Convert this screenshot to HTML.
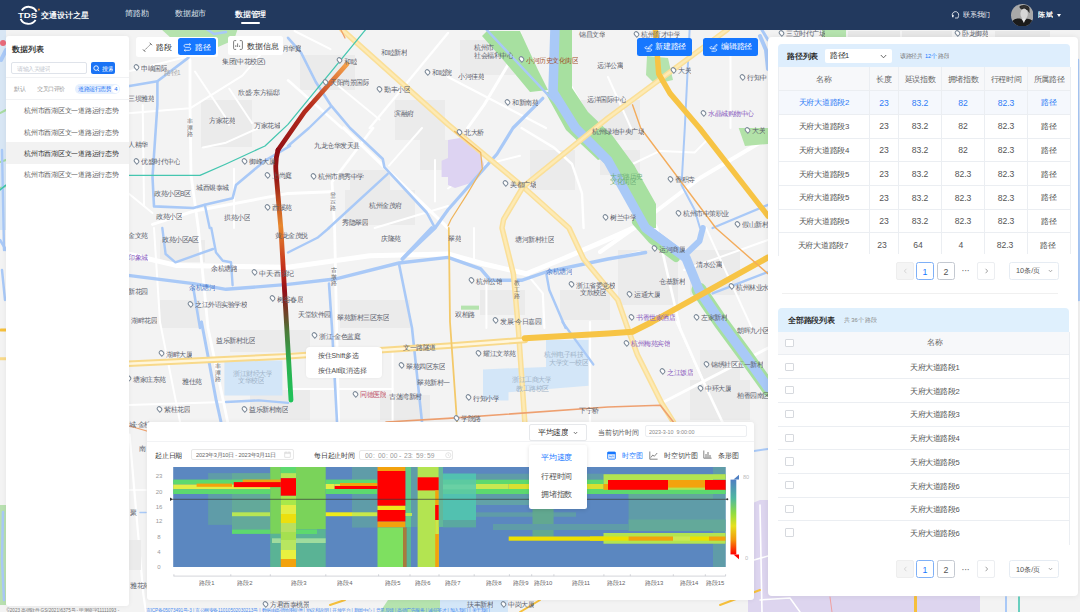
<!DOCTYPE html>
<html><head><meta charset="utf-8">
<style>
*{margin:0;padding:0;box-sizing:border-box}
html,body{width:1080px;height:612px;overflow:hidden;font-family:"Liberation Sans",sans-serif;background:#f3f3f3;color:#333}
.abs{position:absolute}
.h{position:absolute;white-space:nowrap;line-height:1;transform:scale(.25);transform-origin:0 0;font-weight:500}
#hdr{position:absolute;left:0;top:0;width:1080px;height:30px;background:#22395e;color:#fff}
.panel{position:absolute;background:#fff;border-radius:4px}
.rel{position:absolute;left:0;top:0}
</style></head><body>
<svg class="abs" style="left:0;top:0" width="1080" height="612" viewBox="0 0 1080 612">
<rect x="0" y="0" width="1080" height="612" fill="#f3f3f3"/>
<rect x="201" y="100" width="51" height="47" fill="#ebebeb"/>
<rect x="300" y="55" width="55" height="35" fill="#ebebeb"/>
<rect x="460" y="40" width="55" height="35" fill="#ebebeb"/>
<rect x="580" y="100" width="60" height="40" fill="#ebebeb"/>
<rect x="395" y="100" width="50" height="40" fill="#ebebeb"/>
<rect x="420" y="140" width="40" height="30" fill="#ebebeb"/>
<rect x="160" y="240" width="45" height="22" fill="#ebebeb"/>
<rect x="340" y="300" width="70" height="28" fill="#ebebeb"/>
<rect x="230" y="330" width="80" height="22" fill="#ebebeb"/>
<rect x="480" y="290" width="45" height="25" fill="#ebebeb"/>
<rect x="618" y="250" width="60" height="55" fill="#ebebeb"/>
<rect x="690" y="250" width="50" height="45" fill="#ebebeb"/>
<rect x="350" y="170" width="40" height="30" fill="#ebebeb"/>
<rect x="380" y="395" width="50" height="25" fill="#ebebeb"/>
<rect x="700" y="350" width="40" height="30" fill="#ebebeb"/>
<rect x="600" y="150" width="40" height="25" fill="#ebebeb"/>
<rect x="345" y="190" width="70" height="35" fill="#ebebeb"/>
<rect x="560" y="290" width="50" height="30" fill="#ebebeb"/>
<rect x="530" y="150" width="45" height="40" fill="#ebebeb"/>
<rect x="160" y="300" width="40" height="28" fill="#ebebeb"/>
<rect x="250" y="390" width="60" height="30" fill="#ebebeb"/>
<rect x="690" y="380" width="60" height="40" fill="#ebebeb"/>
<path d="M128 254 L177 265.6 L288 267.2 L369.7 255.8 L448 254 L484 264 L526.4 273.8 L562.4 259 L608 239.4 L640 225" stroke="#ffffff" stroke-width="5" fill="none" stroke-linecap="round" stroke-linejoin="round" />
<path d="M768 137.8 L700 178 L634 228 L600 252" stroke="#ffffff" stroke-width="4" fill="none" stroke-linecap="round" stroke-linejoin="round" />
<path d="M172 30 L190 60 L190 105 L191 175 L198.3 228 L208 328 L227.7 422" stroke="#ffffff" stroke-width="2.8" fill="none" stroke-linecap="round" stroke-linejoin="round" />
<path d="M343.6 128 L448 228" stroke="#ffffff" stroke-width="3.2" fill="none" stroke-linecap="round" stroke-linejoin="round" />
<path d="M288 80.3 L342 128" stroke="#ffffff" stroke-width="2.6" fill="none" stroke-linecap="round" stroke-linejoin="round" />
<path d="M448 33 L369.7 128" stroke="#ffffff" stroke-width="2.4" fill="none" stroke-linecap="round" stroke-linejoin="round" />
<path d="M373 128 L332 182 L334.6 228 L338.6 422" stroke="#ffffff" stroke-width="2.8" fill="none" stroke-linecap="round" stroke-linejoin="round" />
<path d="M152.5 224.4 L193.4 211.3 L288 193.4 L330.5 191.7" stroke="#ffffff" stroke-width="3" fill="none" stroke-linecap="round" stroke-linejoin="round" />
<path d="M520 33 L508.5 64 L484 105 L467.6 128" stroke="#ffffff" stroke-width="3" fill="none" stroke-linecap="round" stroke-linejoin="round" />
<path d="M448 77 L546 128" stroke="#ffffff" stroke-width="2.2" fill="none" stroke-linecap="round" stroke-linejoin="round" />
<path d="M564 28 L565.6 77 L595 128 L608 141 L657 228 L680 328 L706 387.4 L722.4 422" stroke="#ffffff" stroke-width="2.6" fill="none" stroke-linecap="round" stroke-linejoin="round" />
<path d="M521.5 128 L554 147.6 L572 164 L582 193.4 L583.6 228" stroke="#ffffff" stroke-width="2.4" fill="none" stroke-linecap="round" stroke-linejoin="round" />
<path d="M448 188.5 L480.7 165.6 L520 155.8" stroke="#ffffff" stroke-width="2" fill="none" stroke-linecap="round" stroke-linejoin="round" />
<path d="M663.6 402 L768 348" stroke="#ffffff" stroke-width="3" fill="none" stroke-linecap="round" stroke-linejoin="round" />
<path d="M608 77 L631 128" stroke="#ffffff" stroke-width="2" fill="none" stroke-linecap="round" stroke-linejoin="round" />
<path d="M730.5 56 L730.5 128" stroke="#ffffff" stroke-width="2" fill="none" stroke-linecap="round" stroke-linejoin="round" />
<path d="M632.5 164 L660 150.9 L694.6 152.5 L709.3 137.8" stroke="#ffffff" stroke-width="2" fill="none" stroke-linecap="round" stroke-linejoin="round" />
<path d="M128 71.5 L190 56" stroke="#ffffff" stroke-width="2.2" fill="none" stroke-linecap="round" stroke-linejoin="round" />
<path d="M195 71.5 L226 118 L229 124.6" stroke="#ffffff" stroke-width="2" fill="none" stroke-linecap="round" stroke-linejoin="round" />
<path d="M128 113.2 L190 108.3 L242.4 75.6 L260 55" stroke="#ffffff" stroke-width="2" fill="none" stroke-linecap="round" stroke-linejoin="round" />
<path d="M229.3 88.7 L252 123" stroke="#ffffff" stroke-width="2" fill="none" stroke-linecap="round" stroke-linejoin="round" />
<path d="M142.7 105 L144 206" stroke="#ffffff" stroke-width="2" fill="none" stroke-linecap="round" stroke-linejoin="round" />
<path d="M128 193 L152.5 213" stroke="#ffffff" stroke-width="2" fill="none" stroke-linecap="round" stroke-linejoin="round" />
<path d="M234 168.8 L234 228" stroke="#ffffff" stroke-width="2" fill="none" stroke-linecap="round" stroke-linejoin="round" />
<path d="M203 147.6 L226 142.7 L258.7 128" stroke="#ffffff" stroke-width="2" fill="none" stroke-linecap="round" stroke-linejoin="round" />
<path d="M154 228 L160 322 L180 422" stroke="#ffffff" stroke-width="2" fill="none" stroke-linecap="round" stroke-linejoin="round" />
<path d="M288 389 L392.6 389" stroke="#ffffff" stroke-width="2.2" fill="none" stroke-linecap="round" stroke-linejoin="round" />
<path d="M392.6 348 L392.6 422" stroke="#ffffff" stroke-width="2" fill="none" stroke-linecap="round" stroke-linejoin="round" />
<path d="M474 228 L474 260" stroke="#ffffff" stroke-width="2" fill="none" stroke-linecap="round" stroke-linejoin="round" />
<path d="M486.4 277 L486.4 328" stroke="#ffffff" stroke-width="2" fill="none" stroke-linecap="round" stroke-linejoin="round" />
<path d="M528 275.4 L542.8 293.4 L544.4 328" stroke="#ffffff" stroke-width="2.2" fill="none" stroke-linecap="round" stroke-linejoin="round" />
<path d="M590 322 L590 422" stroke="#ffffff" stroke-width="2.2" fill="none" stroke-linecap="round" stroke-linejoin="round" />
<path d="M706 228 L751.8 328" stroke="#ffffff" stroke-width="2" fill="none" stroke-linecap="round" stroke-linejoin="round" />
<path d="M608 259 L640 252" stroke="#ffffff" stroke-width="2" fill="none" stroke-linecap="round" stroke-linejoin="round" />
<path d="M389 165.6 L422 128" stroke="#ffffff" stroke-width="2" fill="none" stroke-linecap="round" stroke-linejoin="round" />
<path d="M435 160 L435 201.5" stroke="#ffffff" stroke-width="2" fill="none" stroke-linecap="round" stroke-linejoin="round" />
<path d="M374.6 228 L448 206" stroke="#ffffff" stroke-width="2" fill="none" stroke-linecap="round" stroke-linejoin="round" />
<path d="M294.5 31 L330.5 49.2" stroke="#ffffff" stroke-width="2" fill="none" stroke-linecap="round" stroke-linejoin="round" />
<path d="M333.8 82 L379.5 119.5" stroke="#ffffff" stroke-width="2" fill="none" stroke-linecap="round" stroke-linejoin="round" />
<path d="M128 405 L226 402" stroke="#ffffff" stroke-width="2" fill="none" stroke-linecap="round" stroke-linejoin="round" />
<path d="M676.6 322 L706 387" stroke="#ffffff" stroke-width="2" fill="none" stroke-linecap="round" stroke-linejoin="round" />
<path d="M684 270 L768 240" stroke="#ffffff" stroke-width="2" fill="none" stroke-linecap="round" stroke-linejoin="round" />
<path d="M448 140 L460 138 L480 152 L484 165 L474 182 L455 188 L448 185 Z" fill="#ddd3f2"/>
<path d="M441.6 160.7 L448 158 L448 177 L441.6 177 Z" fill="#ddd3f2"/>
<path d="M748 505 L760 500 L980 500 L980 612 L748 612 Z" fill="#ddd5ef"/>
<path d="M754 451 L768 449" stroke="#a9c9f7" stroke-width="2" fill="none" stroke-linecap="round" stroke-linejoin="round" />
<path d="M754 560 L768 556 M760 505 L762 612" stroke="#ffffff" stroke-width="1.6" fill="none" stroke-linecap="round" stroke-linejoin="round" />
<path d="M760 600 L790 598 L800 612" stroke="#ffffff" stroke-width="1.5" fill="none" stroke-linecap="round" stroke-linejoin="round" />
<path d="M830 597 L832 612" stroke="#f0a0a0" stroke-width="1" fill="none" stroke-linecap="round" stroke-linejoin="round" />
<path d="M915.5 597 L915.5 612" stroke="#f6c03c" stroke-width="3" fill="none" stroke-linecap="round" stroke-linejoin="round" />
<path d="M1006 597 L1006 612" stroke="#a9c9f7" stroke-width="2" fill="none" stroke-linecap="round" stroke-linejoin="round" />
<path d="M1019 597 L1019 612" stroke="#3bc3ae" stroke-width="1.5" fill="none" stroke-linecap="round" stroke-linejoin="round" />
<rect x="822" y="30" width="24" height="7" fill="#b5e3ae"/>
<rect x="848" y="31" width="52" height="6" fill="#e8e8e8"/>
<rect x="902" y="31" width="50" height="6" fill="#e8e8e8"/>
<rect x="995" y="31" width="55" height="6" fill="#e8e8e8"/>
<path d="M762 30 L768 40" stroke="#a9c9f7" stroke-width="3" fill="none" stroke-linecap="round" stroke-linejoin="round" />
<rect x="0" y="30" width="6" height="200" fill="#d8e6f4"/>
<path d="M0 113 L6 110 M0 162 L6 160 M0 188 L6 186" stroke="#a8dca0" stroke-width="2" fill="none" stroke-linecap="round" stroke-linejoin="round" />
<rect x="0" y="505" width="6" height="100" fill="#b8e0b0"/>
<path d="M3 512 L2 560 L4 600" stroke="#a9c9f7" stroke-width="2.5" fill="none" stroke-linecap="round" stroke-linejoin="round" />
<path d="M0 358.7 L6 358.7" stroke="#f8d98a" stroke-width="3" fill="none" stroke-linecap="round" stroke-linejoin="round" />
<path d="M0 240 L6 250 M2 270 L5 300" stroke="#a9c9f7" stroke-width="2.5" fill="none" stroke-linecap="round" stroke-linejoin="round" />
<circle cx="3" cy="43" r="3" fill="#e86a7a"/>
<path d="M224.4 360.4 L282.4 360.4 L282.4 395.5 L224.4 395.5 Z" fill="#d3e6f8"/>
<path d="M483 369.4 L546 367 L546 340 L588.5 340 L588.5 385.7 L508.5 392.3 L508.5 400.4 L500.3 400.4 L483 398.8 Z" fill="#d3e6f8"/>
<path d="M738.7 128 L768 128 L768 144 L745 146 Z" fill="#b2e2a8"/>
<path d="M647 56 L668 58 L673 80 L655 84 L646 75 Z" fill="#b5e3ae"/>
<path d="M461 305.6 L479 305.6 L479 309.7 L461 309.7 Z" fill="#b5e3ae"/>
<path d="M160 28 L238 28 L234 40 L218 47 L196 46 L172 39 Z" fill="#b5e3ae"/>
<path d="M205 28 L214 34 L226 32" stroke="#a9c9f7" stroke-width="2.5" fill="none" stroke-linecap="round" stroke-linejoin="round" />
<path d="M487 31 L520 31 L538 70 L548 90 L530 92 L505 62 L482 36 Z" fill="#a7e0a0"/>
<path d="M559 28 L572 28 L572 88 L588 112 L612 135 L634 165 L656 204 L656 228 L640 228 L612 172 L582 138 L560 104 L557 92 Z" fill="#a7e0a0"/>
<path d="M545 92 L552 92 L572 125 L604 158 L598 160 L566 130 Z" fill="#a7e0a0"/>
<path d="M636 222 L652 240 L676 258" stroke="#a7e0a0" stroke-width="8" fill="none" stroke-linecap="round" stroke-linejoin="round" />
<path d="M699 290 L720.7 322 L745 355 L770 390" stroke="#a7e0a0" stroke-width="15" fill="none" stroke-linecap="round" stroke-linejoin="round" />
<path d="M555 28 L553 92 L575.5 128 L608 160.7 L645.6 228 L686 258 L699 290 L720.7 322 L745 355 L768 387.4" stroke="#a9c9f7" stroke-width="9.5" fill="none" stroke-linecap="round" stroke-linejoin="round" />
<path d="M648 228 L686 256 M686 254 L699.5 241 L702.8 228" stroke="#a9c9f7" stroke-width="6" fill="none" stroke-linecap="round" stroke-linejoin="round" />
<path d="M485 28 L548 95 L580 128" stroke="#a9c9f7" stroke-width="2.5" fill="none" stroke-linecap="round" stroke-linejoin="round" />
<path d="M760 36 L766 50 L768 69" stroke="#a9c9f7" stroke-width="4" fill="none" stroke-linecap="round" stroke-linejoin="round" />
<path d="M542.8 98.3 L513 128 L497 154 L448 209.7 L435 228 L402.4 259" stroke="#a9c9f7" stroke-width="3.2" fill="none" stroke-linecap="round" stroke-linejoin="round" />
<path d="M128 275.4 L193.4 283.6 L226 289.3 L288 284.4 L337 278.7 L399 263 L448 257.4 L480.7 268.8 L490.5 280.3 L521.5 280.3 L546 272 L608 259 L645.6 252.5" stroke="#a9c9f7" stroke-width="3.4" fill="none" stroke-linecap="round" stroke-linejoin="round" />
<path d="M201.5 322 L208 356.3 L216.2 400.4 L221 422" stroke="#a9c9f7" stroke-width="3" fill="none" stroke-linecap="round" stroke-linejoin="round" />
<path d="M193.4 288.5 L200 328 L201.5 322" stroke="#a9c9f7" stroke-width="2.6" fill="none" stroke-linecap="round" stroke-linejoin="round" />
<path d="M329 283.6 L332 328 L337 422" stroke="#a9c9f7" stroke-width="2.6" fill="none" stroke-linecap="round" stroke-linejoin="round" />
<path d="M399 264 L412 328 L422 422" stroke="#a9c9f7" stroke-width="2.6" fill="none" stroke-linecap="round" stroke-linejoin="round" />
<path d="M546 272 L549.3 290 L565.6 328" stroke="#a9c9f7" stroke-width="2.4" fill="none" stroke-linecap="round" stroke-linejoin="round" />
<path d="M562.4 322 L593.4 364.5" stroke="#a9c9f7" stroke-width="2.2" fill="none" stroke-linecap="round" stroke-linejoin="round" />
<path d="M288 37.8 L301 52.5 L315.8 82 L330.5 104.8 L350 128 L382.8 159 L384.4 167.2 L427 213 L435 228" stroke="#a9c9f7" stroke-width="2.6" fill="none" stroke-linecap="round" stroke-linejoin="round" />
<path d="M330.5 107 L309 128 L288 146" stroke="#a9c9f7" stroke-width="2.4" fill="none" stroke-linecap="round" stroke-linejoin="round" />
<path d="M387.7 173.8 L328.8 228" stroke="#a9c9f7" stroke-width="2.4" fill="none" stroke-linecap="round" stroke-linejoin="round" />
<path d="M128 86.2 L157.4 81.3 L188.5 57.6" stroke="#a9c9f7" stroke-width="2.6" fill="none" stroke-linecap="round" stroke-linejoin="round" />
<path d="M157.4 81.3 L157.4 105 L152.5 177 L154 206.4 L193.4 208 L204.8 204.8 L232.6 198.3 L236 185 L265 160.7 L290 146" stroke="#a9c9f7" stroke-width="2.6" fill="none" stroke-linecap="round" stroke-linejoin="round" />
<path d="M204.8 204.8 L209.7 228" stroke="#a9c9f7" stroke-width="2.4" fill="none" stroke-linecap="round" stroke-linejoin="round" />
<path d="M162.3 228 L165.6 254 L175.4 262.3 L213 249" stroke="#a9c9f7" stroke-width="2.4" fill="none" stroke-linecap="round" stroke-linejoin="round" />
<path d="M211.3 228 L216 252.5 L222.8 260.7 L231 262.3 L232.6 285.2" stroke="#a9c9f7" stroke-width="2.4" fill="none" stroke-linecap="round" stroke-linejoin="round" />
<path d="M288 252.5 L317.4 237.8 L329 228" stroke="#a9c9f7" stroke-width="2.4" fill="none" stroke-linecap="round" stroke-linejoin="round" />
<path d="M431.8 228 L402.4 259" stroke="#a9c9f7" stroke-width="3.6" fill="none" stroke-linecap="round" stroke-linejoin="round" />
<path d="M689.7 28 L684.8 128 L681.5 185 L694.6 209.7 L700 228" stroke="#a9c9f7" stroke-width="2" fill="none" stroke-linecap="round" stroke-linejoin="round" />
<path d="M712.6 228 L768 204.8" stroke="#a9c9f7" stroke-width="2.4" fill="none" stroke-linecap="round" stroke-linejoin="round" />
<path d="M712.6 293.4 L768 272" stroke="#a9c9f7" stroke-width="2.4" fill="none" stroke-linecap="round" stroke-linejoin="round" />
<path d="M226 402 L258.7 400.4 L288 402.9" stroke="#a9c9f7" stroke-width="2.4" fill="none" stroke-linecap="round" stroke-linejoin="round" />
<path d="M1 60 L6 50" stroke="#a9c9f7" stroke-width="4" fill="none" stroke-linecap="round" stroke-linejoin="round" />
<path d="M2 150 L4 250" stroke="#a9c9f7" stroke-width="2.4" fill="none" stroke-linecap="round" stroke-linejoin="round" />
<path d="M1078 60 L1079 300" stroke="#a9c9f7" stroke-width="2.4" fill="none" stroke-linecap="round" stroke-linejoin="round" />
<path d="M342 29.6 L448 124.4 L523 186.8 L569 228 L583.6 259 L608 288.5 L617.8 300 L627.6 328 L637.4 354.7 L662 403.7 L673.4 422" stroke="#fadf98" stroke-width="5.5" fill="none" stroke-linecap="round" stroke-linejoin="round" />
<path d="M342 29.6 L448 124.4 L523 186.8 L569 228 L583.6 259 L608 288.5 L617.8 300 L627.6 328 L637.4 354.7 L662 403.7 L673.4 422" stroke="#fdeab4" stroke-width="2.5" fill="none" stroke-linecap="round" stroke-linejoin="round" />
<path d="M727.3 29.6 L608 117.9 L523 186.8 L503.6 219.5 L502 228 L513.4 273.8 L518.3 328 L524.8 422" stroke="#fadf98" stroke-width="5.5" fill="none" stroke-linecap="round" stroke-linejoin="round" />
<path d="M727.3 29.6 L608 117.9 L523 186.8 L503.6 219.5 L502 228 L513.4 273.8 L518.3 328 L524.8 422" stroke="#fdeab4" stroke-width="2.5" fill="none" stroke-linecap="round" stroke-linejoin="round" />
<path d="M128 363.7 L288 356.3 L448 345.7 L524.8 340" stroke="#f8d98a" stroke-width="6.5" fill="none" stroke-linecap="round" stroke-linejoin="round" />
<path d="M128 363.7 L288 356.3 L448 345.7 L524.8 340" stroke="#fff6dc" stroke-width="2.6" fill="none" stroke-linecap="round" stroke-linejoin="round" />
<path d="M655.4 29.6 L658.7 73.8 L670 93.4 L699.5 128 L768 216" stroke="#f7c445" stroke-width="5.5" fill="none" stroke-linecap="round" stroke-linejoin="round" />
<path d="M524.8 338.3 L608 333.4 L632.5 331.8 L652 322 L768 257.4" stroke="#f7c445" stroke-width="6" fill="none" stroke-linecap="round" stroke-linejoin="round" />
<path d="M448.8 228 L450 322 L457 422" stroke="#f3c96a" stroke-width="1.8" fill="none" stroke-linecap="round" stroke-linejoin="round" />
<path d="M1 330 L6 330" stroke="#f6c03c" stroke-width="3" fill="none" stroke-linecap="round" stroke-linejoin="round" />
<path d="M632.5 104.8 L640.7 128 L715.8 228 L768 273.8" stroke="#f3ac5c" stroke-width="1.4" fill="none" stroke-linecap="round" stroke-linejoin="round" />
<path d="M454.5 131.3 L480.7 152.5 L482.3 168.8 L467.6 193.4 L451 219.5 L448 226" stroke="#efb45a" stroke-width="1.2" fill="none" stroke-linecap="round" stroke-linejoin="round" />
<path d="M386 422 L448 418.4 L608 407 L660.3 405.3 L673.4 422" stroke="#eea070" stroke-width="1.6" fill="none" stroke-linecap="round" stroke-linejoin="round" />
<path d="M340 28 L345 38" stroke="#f0a06a" stroke-width="1.3" fill="none" stroke-linecap="round" stroke-linejoin="round" />
<path d="M129.5 426 L146.8 431" stroke="#f0a06a" stroke-width="1.3" fill="none" stroke-linecap="round" stroke-linejoin="round" />
<path d="M129.5 434.6 L143.3 594 L146 612" stroke="#ffffff" stroke-width="2.2" fill="none" stroke-linecap="round" stroke-linejoin="round" />
<path d="M129 490 L146 490" stroke="#ffffff" stroke-width="1.5" fill="none" stroke-linecap="round" stroke-linejoin="round" />
<path d="M140 512.6 L146 512.6" stroke="#a9c9f7" stroke-width="1.5" fill="none" stroke-linecap="round" stroke-linejoin="round" />
<rect x="129" y="540" width="12" height="30" fill="#ebebeb"/>
<path d="M146 600 L260 600 L262 612 L146 612 Z" fill="#f3f3f3"/>
<path d="M330 605 L345 600 M520 612 L540 600" stroke="#f6c03c" stroke-width="2" fill="none" stroke-linecap="round" stroke-linejoin="round" />
<path d="M388 600 L440 600 L445 612 L380 612 Z" fill="#b5e3ae"/>
<path d="M440 600 L508 600 L508 612 L440 612 Z" fill="#d3e6f8"/>
<path d="M720 605 L760 590" stroke="#f6c03c" stroke-width="2" fill="none" stroke-linecap="round" stroke-linejoin="round" />
<path d="M365.6 29.6 L288 124.4 L265 146 L226 164 L200 175.4 L128 175.4" stroke="#45c6b0" stroke-width="1.3" fill="none" stroke-linecap="round" stroke-linejoin="round" />
<path d="M0 190 L6 185" stroke="#3bc3ae" stroke-width="1.5" fill="none" stroke-linecap="round" stroke-linejoin="round" />
<defs>
<linearGradient id="rg1" gradientUnits="userSpaceOnUse" x1="347" y1="64" x2="277" y2="160">
<stop offset="0" stop-color="#f5a24a"/><stop offset="0.45" stop-color="#b8301e"/><stop offset="1" stop-color="#8e0d14"/></linearGradient>
<linearGradient id="rg2" gradientUnits="userSpaceOnUse" x1="0" y1="150" x2="0" y2="402">
<stop offset="0" stop-color="#8e0d14"/><stop offset="0.12" stop-color="#9a1a14"/><stop offset="0.3" stop-color="#e8882e"/>
<stop offset="0.48" stop-color="#c0281a"/><stop offset="0.56" stop-color="#920f18"/><stop offset="0.66" stop-color="#6a4a2a"/>
<stop offset="0.72" stop-color="#4a7a38"/><stop offset="0.85" stop-color="#2ab050"/><stop offset="1" stop-color="#1fc35a"/></linearGradient>
</defs>
<path d="M347 64 L304.5 112 L278 150" stroke="url(#rg1)" stroke-width="4.8" fill="none" stroke-linecap="round" stroke-linejoin="round" /><path d="M278 150 Q275 160 276 172 L281 230 L291 400" stroke="url(#rg2)" stroke-width="4.8" fill="none" stroke-linecap="round" stroke-linejoin="round" />
</svg>
<div class="abs" style="left:134.0px;top:64.4px;width:5px;height:6px;border-radius:50% 50% 50% 0;transform:rotate(-45deg);border:1.3px solid #7d8a99;background:#fff"></div>
<div class="h" style="left:141.00px;top:64.78px;font-size:26.00px;color:#5a606b;">申嘀国际</div>
<div class="h" style="left:164.00px;top:68.88px;font-size:26.00px;color:#aaa;">路径1</div>
<div class="h" style="left:222.00px;top:58.18px;font-size:26.00px;color:#5a606b;">集团(中花校区)</div>
<div class="h" style="left:275.00px;top:45.48px;font-size:26.00px;color:#5a606b;">碧月华庭</div>
<div class="abs" style="left:337.0px;top:57.2px;width:5px;height:6px;border-radius:50% 50% 50% 0;transform:rotate(-45deg);border:1.3px solid #7d8a99;background:#fff"></div>
<div class="h" style="left:344.00px;top:57.58px;font-size:26.00px;color:#5a606b;">和睦</div>
<div class="abs" style="left:323.0px;top:78.5px;width:5px;height:6px;border-radius:50% 50% 50% 0;transform:rotate(-45deg);border:1.3px solid #7d8a99;background:#fff"></div>
<div class="h" style="left:330.00px;top:78.88px;font-size:26.00px;color:#5a606b;">天阳尚景国际</div>
<div class="h" style="left:237.50px;top:88.58px;font-size:26.00px;color:#5a606b;">欣盛·东方福邸</div>
<div class="h" style="left:128.00px;top:95.18px;font-size:26.00px;color:#5a606b;">三坝雅苑</div>
<div class="h" style="left:209.00px;top:117.38px;font-size:26.00px;color:#5a606b;">方家花苑</div>
<div class="h" style="left:253.80px;top:121.88px;font-size:26.00px;color:#5a606b;">万家花城</div>
<div class="h" style="left:381.00px;top:49.38px;font-size:26.00px;color:#5a606b;">和睦新村</div>
<div class="abs" style="left:377.0px;top:85.5px;width:5px;height:6px;border-radius:50% 50% 50% 0;transform:rotate(-45deg);border:1.3px solid #7d8a99;background:#fff"></div>
<div class="h" style="left:384.00px;top:85.88px;font-size:26.00px;color:#5a606b;">勤丰小区</div>
<div class="abs" style="left:425.0px;top:68.5px;width:5px;height:6px;border-radius:50% 50% 50% 0;transform:rotate(-45deg);border:1.3px solid #7d8a99;background:#fff"></div>
<div class="h" style="left:432.00px;top:68.88px;font-size:26.00px;color:#5a606b;">和睦院</div>
<div class="h" style="left:394.00px;top:110.48px;font-size:26.00px;color:#5a606b;">滨融府</div>
<div class="h" style="left:128.00px;top:140.88px;font-size:26.00px;color:#5a606b;">人精华</div>
<div class="abs" style="left:134.0px;top:157.5px;width:5px;height:6px;border-radius:50% 50% 50% 0;transform:rotate(-45deg);border:1.3px solid #7d8a99;background:#fff"></div>
<div class="h" style="left:141.00px;top:157.88px;font-size:26.00px;color:#5a606b;">优盛时代中心</div>
<div class="abs" style="left:242.0px;top:157.5px;width:5px;height:6px;border-radius:50% 50% 50% 0;transform:rotate(-45deg);border:1.3px solid #7d8a99;background:#fff"></div>
<div class="h" style="left:249.00px;top:157.88px;font-size:26.00px;color:#5a606b;">御峰大厦</div>
<div class="abs" style="left:264.8px;top:171.5px;width:5px;height:6px;border-radius:50% 50% 50% 0;transform:rotate(-45deg);border:1.3px solid #7d8a99;background:#fff"></div>
<div class="h" style="left:271.80px;top:171.88px;font-size:26.00px;color:#5a606b;">上尚庭</div>
<div class="abs" style="left:310.5px;top:172.5px;width:5px;height:6px;border-radius:50% 50% 50% 0;transform:rotate(-45deg);border:1.3px solid #7d8a99;background:#fff"></div>
<div class="h" style="left:317.50px;top:172.88px;font-size:26.00px;color:#5a606b;">杭州市腾秀中学</div>
<div class="h" style="left:314.00px;top:142.48px;font-size:26.00px;color:#5a606b;">九龙仓华发天县</div>
<div class="h" style="left:196.00px;top:183.88px;font-size:26.00px;color:#5a606b;">城西银泰城</div>
<div class="h" style="left:154.00px;top:189.88px;font-size:26.00px;color:#5a606b;">政苑小区B区</div>
<div class="h" style="left:369.00px;top:202.38px;font-size:26.00px;color:#5a606b;">杭州金茂府</div>
<div class="abs" style="left:264.8px;top:203.5px;width:5px;height:6px;border-radius:50% 50% 50% 0;transform:rotate(-45deg);border:1.3px solid #7d8a99;background:#fff"></div>
<div class="h" style="left:271.80px;top:203.88px;font-size:26.00px;color:#5a606b;">西溪苑</div>
<div class="h" style="left:224.40px;top:213.88px;font-size:26.00px;color:#5a606b;">拱苑小区</div>
<div class="h" style="left:155.80px;top:212.88px;font-size:26.00px;color:#5a606b;">政苑小区</div>
<div class="h" style="left:342.00px;top:219.28px;font-size:26.00px;color:#5a606b;">秀隐翠园</div>
<div class="h" style="left:474.00px;top:44.48px;font-size:26.00px;color:#5a606b;">杭州市</div>
<div class="h" style="left:474.00px;top:51.88px;font-size:26.00px;color:#5a606b;">社会福利中心</div>
<div class="abs" style="left:519.4px;top:56.2px;width:5px;height:6px;border-radius:50% 50% 50% 0;transform:rotate(-45deg);border:1.3px solid #7d8a99;background:#fff"></div>
<div class="h" style="left:526.40px;top:56.58px;font-size:26.00px;color:#a0522d;">小河历史文化街区</div>
<div class="h" style="left:578.70px;top:30.78px;font-size:26.00px;color:#5a606b;">锦昌文华</div>
<div class="abs" style="left:633.8px;top:31.0px;width:5px;height:6px;border-radius:50% 50% 50% 0;transform:rotate(-45deg);border:1.3px solid #7d8a99;background:#fff"></div>
<div class="h" style="left:640.80px;top:31.38px;font-size:26.00px;color:#5a606b;">杭州育才中学</div>
<div class="h" style="left:457.80px;top:73.28px;font-size:26.00px;color:#5a606b;">小河佳苑</div>
<div class="h" style="left:596.70px;top:62.48px;font-size:26.00px;color:#5a606b;">远洋公寓</div>
<div class="abs" style="left:671.4px;top:67.0px;width:5px;height:6px;border-radius:50% 50% 50% 0;transform:rotate(-45deg);border:1.3px solid #7d8a99;background:#fff"></div>
<div class="h" style="left:678.40px;top:67.38px;font-size:26.00px;color:#5a606b;">大关</div>
<div class="abs" style="left:504.7px;top:99.0px;width:5px;height:6px;border-radius:50% 50% 50% 0;transform:rotate(-45deg);border:1.3px solid #7d8a99;background:#fff"></div>
<div class="h" style="left:511.70px;top:99.38px;font-size:26.00px;color:#5a606b;">和新南苑</div>
<div class="h" style="left:586.90px;top:95.78px;font-size:26.00px;color:#5a606b;">远洋国际中心</div>
<div class="abs" style="left:740.0px;top:73.5px;width:5px;height:6px;border-radius:50% 50% 50% 0;transform:rotate(-45deg);border:1.3px solid #7d8a99;background:#fff"></div>
<div class="h" style="left:747.00px;top:73.88px;font-size:26.00px;color:#5a606b;">行知中</div>
<div class="abs" style="left:700.8px;top:110.1px;width:5px;height:6px;border-radius:50% 50% 50% 0;transform:rotate(-45deg);border:1.3px solid #7d8a99;background:#fff"></div>
<div class="h" style="left:707.80px;top:110.48px;font-size:26.00px;color:#8a5cc0;">水晶城购物中心</div>
<div class="abs" style="left:745.0px;top:126.5px;width:5px;height:6px;border-radius:50% 50% 50% 0;transform:rotate(-45deg);border:1.3px solid #7d8a99;background:#fff"></div>
<div class="h" style="left:752.00px;top:126.88px;font-size:26.00px;color:#5a606b;">大关</div>
<div class="abs" style="left:457.3px;top:129.1px;width:5px;height:6px;border-radius:50% 50% 50% 0;transform:rotate(-45deg);border:1.3px solid #7d8a99;background:#fff"></div>
<div class="h" style="left:464.30px;top:129.48px;font-size:26.00px;color:#5a606b;">北大桥</div>
<div class="h" style="left:591.80px;top:127.88px;font-size:26.00px;color:#5a606b;">杭州绿地中央广场</div>
<div class="abs" style="left:503.0px;top:180.4px;width:5px;height:6px;border-radius:50% 50% 50% 0;transform:rotate(-45deg);border:1.3px solid #7d8a99;background:#fff"></div>
<div class="h" style="left:510.00px;top:180.78px;font-size:26.00px;color:#5a606b;">美都广场</div>
<div class="h" style="left:609.80px;top:172.58px;font-size:26.00px;color:#6fb07a;">大兜路历史</div>
<div class="h" style="left:609.80px;top:178.38px;font-size:26.00px;color:#6fb07a;">文化街区</div>
<div class="abs" style="left:668.0px;top:175.5px;width:5px;height:6px;border-radius:50% 50% 50% 0;transform:rotate(-45deg);border:1.3px solid #7d8a99;background:#fff"></div>
<div class="h" style="left:675.00px;top:175.88px;font-size:26.00px;color:#5a606b;">香积寺</div>
<div class="abs" style="left:602.8px;top:213.5px;width:5px;height:6px;border-radius:50% 50% 50% 0;transform:rotate(-45deg);border:1.3px solid #7d8a99;background:#fff"></div>
<div class="h" style="left:609.80px;top:213.88px;font-size:26.00px;color:#5a606b;">树兰中学</div>
<div class="abs" style="left:676.0px;top:210.1px;width:5px;height:6px;border-radius:50% 50% 50% 0;transform:rotate(-45deg);border:1.3px solid #7d8a99;background:#fff"></div>
<div class="h" style="left:683.00px;top:210.48px;font-size:26.00px;color:#5a606b;">杭州市中策职业</div>
<div class="abs" style="left:735.0px;top:220.5px;width:5px;height:6px;border-radius:50% 50% 50% 0;transform:rotate(-45deg);border:1.3px solid #7d8a99;background:#fff"></div>
<div class="h" style="left:742.00px;top:220.88px;font-size:26.00px;color:#5a606b;">假山新村</div>
<div class="h" style="left:128.00px;top:231.88px;font-size:26.00px;color:#5a606b;">金文苑</div>
<div class="h" style="left:162.30px;top:235.88px;font-size:26.00px;color:#5a606b;">政苑小区A区</div>
<div class="h" style="left:275.00px;top:231.88px;font-size:26.00px;color:#5a606b;">黄龙金茂悦</div>
<div class="h" style="left:381.30px;top:234.58px;font-size:26.00px;color:#5a606b;">庆隆苑</div>
<div class="h" style="left:128.00px;top:254.18px;font-size:26.00px;color:#8a5cc0;">印象城</div>
<div class="h" style="left:211.30px;top:264.68px;font-size:26.00px;color:#5a606b;">余杭塘路</div>
<div class="abs" style="left:251.7px;top:269.2px;width:5px;height:6px;border-radius:50% 50% 50% 0;transform:rotate(-45deg);border:1.3px solid #7d8a99;background:#fff"></div>
<div class="h" style="left:258.70px;top:269.58px;font-size:26.00px;color:#5a606b;">中天·西溪纪</div>
<div class="h" style="left:188.50px;top:283.58px;font-size:26.00px;color:#4a7ac8;">余杭塘河</div>
<div class="h" style="left:128.00px;top:288.48px;font-size:26.00px;color:#5a606b;">新花园</div>
<div class="abs" style="left:188.0px;top:300.9px;width:5px;height:6px;border-radius:50% 50% 50% 0;transform:rotate(-45deg);border:1.3px solid #7d8a99;background:#fff"></div>
<div class="h" style="left:195.00px;top:301.28px;font-size:26.00px;color:#5a606b;">之江外语实验学校</div>
<div class="abs" style="left:269.7px;top:295.3px;width:5px;height:6px;border-radius:50% 50% 50% 0;transform:rotate(-45deg);border:1.3px solid #7d8a99;background:#fff"></div>
<div class="h" style="left:276.70px;top:295.68px;font-size:26.00px;color:#5a606b;">树谷春居</div>
<div class="h" style="left:298.00px;top:311.38px;font-size:26.00px;color:#5a606b;">天堂软件园</div>
<div class="h" style="left:337.00px;top:313.68px;font-size:26.00px;color:#5a606b;">翠苑新村三区东区</div>
<div class="h" style="left:131.30px;top:316.88px;font-size:26.00px;color:#5a606b;">湖畔花园</div>
<div class="h" style="left:216.20px;top:337.18px;font-size:26.00px;color:#5a606b;">益乐新村北区</div>
<div class="abs" style="left:312.0px;top:332.2px;width:5px;height:6px;border-radius:50% 50% 50% 0;transform:rotate(-45deg);border:1.3px solid #7d8a99;background:#fff"></div>
<div class="h" style="left:319.00px;top:332.58px;font-size:26.00px;color:#5a606b;">浙江·金色蓝庭</div>
<div class="abs" style="left:158.6px;top:350.2px;width:5px;height:6px;border-radius:50% 50% 50% 0;transform:rotate(-45deg);border:1.3px solid #7d8a99;background:#fff"></div>
<div class="h" style="left:165.60px;top:350.58px;font-size:26.00px;color:#5a606b;">湖畔大厦</div>
<div class="h" style="left:402.50px;top:343.68px;font-size:26.00px;color:#5a606b;">文一路隧道</div>
<div class="abs" style="left:398.8px;top:362.3px;width:5px;height:6px;border-radius:50% 50% 50% 0;transform:rotate(-45deg);border:1.3px solid #7d8a99;background:#fff"></div>
<div class="h" style="left:405.80px;top:362.68px;font-size:26.00px;color:#5a606b;">翠苑四区东区</div>
<div class="abs" style="left:126.0px;top:375.4px;width:5px;height:6px;border-radius:50% 50% 50% 0;transform:rotate(-45deg);border:1.3px solid #7d8a99;background:#fff"></div>
<div class="h" style="left:133.00px;top:375.78px;font-size:26.00px;color:#5a606b;">塘家庄东苑</div>
<div class="h" style="left:182.00px;top:377.88px;font-size:26.00px;color:#5a606b;">雅仕苑</div>
<div class="h" style="left:232.60px;top:369.88px;font-size:26.00px;color:#9fb3c8;">浙江财经大学</div>
<div class="h" style="left:238.00px;top:376.88px;font-size:26.00px;color:#9fb3c8;">文华校区</div>
<div class="abs" style="left:353.0px;top:390.7px;width:5px;height:6px;border-radius:50% 50% 50% 0;transform:rotate(-45deg);border:1.3px solid #7d8a99;background:#fff"></div>
<div class="h" style="left:360.00px;top:391.08px;font-size:26.00px;color:#c0506a;">同德医院</div>
<div class="h" style="left:389.40px;top:393.08px;font-size:26.00px;color:#5a606b;">古荡湾新村</div>
<div class="h" style="left:417.20px;top:378.88px;font-size:26.00px;color:#5a606b;">翠苑新村一</div>
<div class="abs" style="left:157.0px;top:405.8px;width:5px;height:6px;border-radius:50% 50% 50% 0;transform:rotate(-45deg);border:1.3px solid #7d8a99;background:#fff"></div>
<div class="h" style="left:164.00px;top:406.18px;font-size:26.00px;color:#5a606b;">紫桂花园</div>
<div class="abs" style="left:242.0px;top:405.8px;width:5px;height:6px;border-radius:50% 50% 50% 0;transform:rotate(-45deg);border:1.3px solid #7d8a99;background:#fff"></div>
<div class="h" style="left:249.00px;top:406.18px;font-size:26.00px;color:#5a606b;">益乐新村南区</div>
<div class="h" style="left:129.00px;top:420.88px;font-size:26.00px;color:#5a606b;">城·金桂</div>
<div class="h" style="left:139.00px;top:445.38px;font-size:26.00px;color:#5a606b;">南</div>
<div class="h" style="left:130.00px;top:509.48px;font-size:26.00px;color:#5a606b;">聚</div>
<div class="h" style="left:129.50px;top:581.88px;font-size:26.00px;color:#5a606b;">雅花苑</div>
<div class="abs" style="left:779.0px;top:29.5px;width:5px;height:6px;border-radius:50% 50% 50% 0;transform:rotate(-45deg);border:1.3px solid #7d8a99;background:#fff"></div>
<div class="h" style="left:786.00px;top:29.88px;font-size:26.00px;color:#5a606b;">三立时代广场</div>
<div class="abs" style="left:955.0px;top:29.5px;width:5px;height:6px;border-radius:50% 50% 50% 0;transform:rotate(-45deg);border:1.3px solid #7d8a99;background:#fff"></div>
<div class="h" style="left:962.00px;top:29.88px;font-size:26.00px;color:#5a606b;">卧龙御苑</div>
<div class="abs" style="left:263.0px;top:601.0px;width:5px;height:6px;border-radius:50% 50% 50% 0;transform:rotate(-45deg);border:1.3px solid #7d8a99;background:#fff"></div>
<div class="h" style="left:270.00px;top:601.38px;font-size:26.00px;color:#5a606b;">方君西泰桃景</div>
<div class="h" style="left:467.00px;top:601.38px;font-size:26.00px;color:#5a606b;">扶丰新村</div>
<div class="abs" style="left:501.0px;top:601.0px;width:5px;height:6px;border-radius:50% 50% 50% 0;transform:rotate(-45deg);border:1.3px solid #7d8a99;background:#fff"></div>
<div class="h" style="left:508.00px;top:601.38px;font-size:26.00px;color:#5a606b;">中岗大厦</div>
<div class="h" style="left:448.00px;top:234.58px;font-size:26.00px;color:#5a606b;">翠苑</div>
<div class="h" style="left:515.00px;top:235.88px;font-size:26.00px;color:#5a606b;">塘河新村社区</div>
<div class="abs" style="left:651.8px;top:245.3px;width:5px;height:6px;border-radius:50% 50% 50% 0;transform:rotate(-45deg);border:1.3px solid #7d8a99;background:#fff"></div>
<div class="h" style="left:658.80px;top:245.68px;font-size:26.00px;color:#5a606b;">运河商厦</div>
<div class="h" style="left:696.40px;top:261.38px;font-size:26.00px;color:#5a606b;">清水公寓</div>
<div class="h" style="left:546.00px;top:267.88px;font-size:26.00px;color:#4a7ac8;">余杭塘河</div>
<div class="abs" style="left:468.8px;top:277.3px;width:5px;height:6px;border-radius:50% 50% 50% 0;transform:rotate(-45deg);border:1.3px solid #7d8a99;background:#fff"></div>
<div class="h" style="left:475.80px;top:277.68px;font-size:26.00px;color:#5a606b;">杭州公馆</div>
<div class="abs" style="left:568.5px;top:281.2px;width:5px;height:6px;border-radius:50% 50% 50% 0;transform:rotate(-45deg);border:1.3px solid #7d8a99;background:#fff"></div>
<div class="h" style="left:575.50px;top:281.58px;font-size:26.00px;color:#5a606b;">浙江省委党校</div>
<div class="h" style="left:580.00px;top:289.18px;font-size:26.00px;color:#5a606b;">文欣校区</div>
<div class="h" style="left:658.80px;top:277.68px;font-size:26.00px;color:#5a606b;">仓基新村</div>
<div class="abs" style="left:728.6px;top:283.2px;width:5px;height:6px;border-radius:50% 50% 50% 0;transform:rotate(-45deg);border:1.3px solid #7d8a99;background:#fff"></div>
<div class="h" style="left:735.60px;top:283.58px;font-size:26.00px;color:#5a606b;">杭州林业水利</div>
<div class="abs" style="left:627.3px;top:291.0px;width:5px;height:6px;border-radius:50% 50% 50% 0;transform:rotate(-45deg);border:1.3px solid #7d8a99;background:#fff"></div>
<div class="h" style="left:634.30px;top:291.38px;font-size:26.00px;color:#5a606b;">运通大厦</div>
<div class="h" style="left:454.50px;top:310.88px;font-size:26.00px;color:#5a606b;">双柏路</div>
<div class="abs" style="left:493.3px;top:317.2px;width:5px;height:6px;border-radius:50% 50% 50% 0;transform:rotate(-45deg);border:1.3px solid #7d8a99;background:#fff"></div>
<div class="h" style="left:500.30px;top:317.58px;font-size:26.00px;color:#5a606b;">发展·今日嘉园</div>
<div class="abs" style="left:629.0px;top:313.9px;width:5px;height:6px;border-radius:50% 50% 50% 0;transform:rotate(-45deg);border:1.3px solid #7d8a99;background:#fff"></div>
<div class="h" style="left:636.00px;top:314.28px;font-size:26.00px;color:#8a5cc0;">书香世家酒店</div>
<div class="abs" style="left:694.3px;top:313.9px;width:5px;height:6px;border-radius:50% 50% 50% 0;transform:rotate(-45deg);border:1.3px solid #7d8a99;background:#fff"></div>
<div class="h" style="left:701.30px;top:314.28px;font-size:26.00px;color:#5a606b;">左家新村</div>
<div class="h" style="left:737.20px;top:327.38px;font-size:26.00px;color:#5a606b;">朝晖九小区</div>
<div class="abs" style="left:624.0px;top:339.5px;width:5px;height:6px;border-radius:50% 50% 50% 0;transform:rotate(-45deg);border:1.3px solid #7d8a99;background:#fff"></div>
<div class="h" style="left:631.00px;top:339.88px;font-size:26.00px;color:#8a5cc0;">杭州梅苑宾馆</div>
<div class="abs" style="left:476.3px;top:349.9px;width:5px;height:6px;border-radius:50% 50% 50% 0;transform:rotate(-45deg);border:1.3px solid #7d8a99;background:#fff"></div>
<div class="h" style="left:483.30px;top:350.28px;font-size:26.00px;color:#5a606b;">耀江文萃苑</div>
<div class="h" style="left:544.40px;top:351.28px;font-size:26.00px;color:#9fb3c8;">杭州电子科技</div>
<div class="h" style="left:549.00px;top:358.78px;font-size:26.00px;color:#9fb3c8;">大学文一校区</div>
<div class="abs" style="left:660.0px;top:368.2px;width:5px;height:6px;border-radius:50% 50% 50% 0;transform:rotate(-45deg);border:1.3px solid #7d8a99;background:#fff"></div>
<div class="h" style="left:667.00px;top:368.58px;font-size:26.00px;color:#8a5cc0;">之江饭店</div>
<div class="abs" style="left:704.0px;top:360.7px;width:5px;height:6px;border-radius:50% 50% 50% 0;transform:rotate(-45deg);border:1.3px solid #7d8a99;background:#fff"></div>
<div class="h" style="left:711.00px;top:361.08px;font-size:26.00px;color:#5a606b;">锦绣社区五一新村</div>
<div class="h" style="left:511.70px;top:376.38px;font-size:26.00px;color:#9fb3c8;">浙江工商大学</div>
<div class="h" style="left:516.00px;top:384.88px;font-size:26.00px;color:#9fb3c8;">教工路校区</div>
<div class="abs" style="left:697.5px;top:384.5px;width:5px;height:6px;border-radius:50% 50% 50% 0;transform:rotate(-45deg);border:1.3px solid #7d8a99;background:#fff"></div>
<div class="h" style="left:704.50px;top:384.88px;font-size:26.00px;color:#5a606b;">中环大厦</div>
<div class="h" style="left:737.20px;top:392.08px;font-size:26.00px;color:#5a606b;">柏香园南区</div>
<div class="abs" style="left:465.5px;top:394.3px;width:5px;height:6px;border-radius:50% 50% 50% 0;transform:rotate(-45deg);border:1.3px solid #7d8a99;background:#fff"></div>
<div class="h" style="left:472.50px;top:394.68px;font-size:26.00px;color:#5a606b;">行知小学</div>
<div class="h" style="left:578.70px;top:406.78px;font-size:26.00px;color:#5a606b;">下宁桥</div>
<div class="abs" style="left:454.0px;top:414.5px;width:5px;height:6px;border-radius:50% 50% 50% 0;transform:rotate(-45deg);border:1.3px solid #7d8a99;background:#fff"></div>
<div class="h" style="left:461.00px;top:414.88px;font-size:26.00px;color:#5a606b;">学院路</div>
<div class="h" style="left:187.00px;top:118.22px;font-size:23.20px;color:#666;">丰</div>
<div class="h" style="left:187.00px;top:124.72px;font-size:23.20px;color:#666;">潭</div>
<div class="h" style="left:187.00px;top:131.22px;font-size:23.20px;color:#666;">路</div>
<div class="h" style="left:330.00px;top:191.92px;font-size:23.20px;color:#666;">登</div>
<div class="h" style="left:330.00px;top:198.42px;font-size:23.20px;color:#666;">云</div>
<div class="h" style="left:330.00px;top:204.92px;font-size:23.20px;color:#666;">路</div>
<div class="h" style="left:330.90px;top:267.22px;font-size:23.20px;color:#666;">古</div>
<div class="h" style="left:330.90px;top:273.72px;font-size:23.20px;color:#666;">墩</div>
<div class="h" style="left:330.90px;top:280.22px;font-size:23.20px;color:#666;">路</div>
<div class="h" style="left:214.90px;top:363.22px;font-size:23.20px;color:#666;">丰</div>
<div class="h" style="left:214.90px;top:369.72px;font-size:23.20px;color:#666;">潭</div>
<div class="h" style="left:214.90px;top:376.22px;font-size:23.20px;color:#666;">路</div>
<div class="h" style="left:513.60px;top:280.22px;font-size:23.20px;color:#666;">教</div>
<div class="h" style="left:513.60px;top:286.72px;font-size:23.20px;color:#666;">工</div>
<div class="h" style="left:513.60px;top:293.22px;font-size:23.20px;color:#666;">路</div>
<div class="h" style="left:0.00px;top:608.29px;font-size:18.40px;color:#777;">&nbsp;&nbsp;&nbsp;&nbsp;&nbsp;©2023 高德软件 GS(2021)6375号 - 甲测资字11111093 -</div>
<div class="h" style="left:146.00px;top:608.29px;font-size:18.40px;color:#4a8cf0;">京ICP备05073491号-3 | 京公网安备11010502030213号 | 数据由高德地图提供 | 协议和说明 | 开放平台 | 新闻中心 | 意见反馈 | 高德广告服务 | 诚征英才 | 加入我们 | 关于我们</div>
<div id="hdr">
<svg class="abs" style="left:14px;top:2px" width="32" height="26" viewBox="14 2 32 26">
  <path d="M21.8 10.5 A8.6 8.6 0 0 1 36.6 11.8" stroke="#fff" stroke-width="2" fill="none"/>
  <path d="M20.6 18.8 A8.6 8.6 0 0 0 35.6 20" stroke="#fff" stroke-width="1.9" fill="none"/>
  <text x="18" y="17.6" font-family="Liberation Sans" font-size="7.6" font-weight="bold" fill="#fff" textLength="19" lengthAdjust="spacingAndGlyphs">TDS</text>
  <circle cx="38.9" cy="9.6" r="1.1" fill="#f08a2c"/>
 </svg>
<div class="h" style="left:40.60px;top:11.11px;font-size:32.40px;color:#fff;font-weight:bold;">交通设计之星</div>
<div class="h" style="left:124.70px;top:9.46px;font-size:31.20px;color:#dde2ea;">简路勘</div>
<div class="h" style="left:175.00px;top:9.46px;font-size:31.20px;color:#dde2ea;">数据超市</div>
<div class="h" style="left:235.30px;top:9.63px;font-size:31.40px;color:#fff;font-weight:bold;">数据管理</div>
<div class="abs" style="left:241.30px;top:22.40px;width:19.00px;height:1.80px;background:#fff;border-radius:1px"></div>
<svg class="abs" style="left:951px;top:10px" width="9" height="9" viewBox="0 0 9 9"><path d="M1.5 6 A3.2 3.2 0 1 1 7.6 5.5" stroke="#e8ebf0" stroke-width="0.9" fill="none"/><rect x="1" y="4.8" width="1.6" height="2.4" rx="0.5" fill="#e8ebf0"/><path d="M4 8 L7 8 L7.6 5.5" stroke="#e8ebf0" stroke-width="0.8" fill="none"/></svg>
<div class="h" style="left:963.30px;top:11.36px;font-size:27.00px;color:#e8ebf0;">联系我们</div>
<svg class="abs" style="left:1010.6px;top:3.6px" width="22.6" height="22.6" viewBox="0 0 22 22">
<defs><clipPath id="avc"><circle cx="11" cy="11" r="11"/></clipPath></defs>
<g clip-path="url(#avc)">
<rect width="22" height="22" fill="#a9a9a9"/>
<path d="M8 3 C9 0 17 0 18 4 L18 9 L16 6 L10 5 Z" fill="#262626"/>
<ellipse cx="12.8" cy="9.5" rx="3.6" ry="5" fill="#d6d6d6"/>
<path d="M10 5 C11 3 16 3 17 6 L17 4 C15 1 10 1 9 4 Z" fill="#333"/>
<path d="M0 22 L1 17 C3 14 7 13.5 10 14.5 L12.5 17 L15 14.5 C18 14 21 16 22 18 L22 22 Z" fill="#1b1b1b"/>
<path d="M10.5 14 L12.5 18.5 L14.5 14 Z" fill="#e6e6e6"/>
</g></svg>
<div class="h" style="left:1038.00px;top:11.35px;font-size:29.60px;color:#fff;font-weight:bold;">陈斌</div>
<div class="abs" style="left:1056.80px;top:13.80px;width:0.00px;height:0.00px;background:transparent;border-left:2.6px solid transparent;border-right:2.6px solid transparent;border-top:3px solid #fff"></div>
</div>
<div class="panel" style="left:6px;top:36px;width:123px;height:570px;border-radius:3px;box-shadow:0 0 5px rgba(0,0,0,0.06)"></div>
<div class="h" style="left:12.00px;top:45.16px;font-size:32.00px;color:#333;font-weight:bold;">数据列表</div>
<div class="abs" style="left:11.30px;top:62.10px;width:75.80px;height:11.90px;background:#fff;border:1px solid #dfe3ea;border-radius:2px"></div>
<div class="h" style="left:16.90px;top:65.54px;font-size:22.20px;color:#c3c7cf;">请输入关键词</div>
<div class="abs" style="left:90.70px;top:61.80px;width:24.40px;height:12.20px;background:#1a73f5;border-radius:2px"></div>
<svg class="abs" style="left:93px;top:64.8px" width="7" height="7" viewBox="0 0 7 7"><circle cx="3.1" cy="3.1" r="2.3" stroke="#fff" stroke-width="0.9" fill="none"/><path d="M4.7 4.7 L6.2 6.2" stroke="#fff" stroke-width="0.9"/></svg>
<div class="h" style="left:101.80px;top:65.54px;font-size:22.20px;color:#fff;">搜索</div>
<div class="abs" style="left:6.00px;top:77.00px;width:123.00px;height:0.80px;background:#f1f2f4;"></div>
<div class="h" style="left:13.60px;top:86.09px;font-size:22.60px;color:#9a9a9a;">默认</div>
<div class="h" style="left:37.40px;top:86.16px;font-size:22.00px;color:#9a9a9a;">交叉口评价</div>
<div class="abs" style="left:75.40px;top:83.60px;width:44.50px;height:10.40px;background:#e6f0fe;border-radius:5.2px"></div>
<div class="h" style="left:77.70px;top:86.14px;font-size:22.20px;color:#1a73f5;">道路运行态势</div>
<div class="abs" style="left:112.20px;top:85.00px;width:6.80px;height:7.60px;background:#fff;border-radius:3.8px"></div>
<div class="h" style="left:110.60px;top:86.12px;width:40px;text-align:center;font-size:24.00px;color:#1a73f5;">4</div>
<div class="abs" style="left:6.00px;top:99.00px;width:123.00px;height:0.80px;background:#f1f2f4;"></div>
<div class="h" style="left:23.70px;top:107.26px;font-size:26.96px;color:#5e5e5e;">杭州市西湖区文一道路运行态势</div>
<div class="h" style="left:23.70px;top:128.56px;font-size:26.96px;color:#5e5e5e;">杭州市西湖区文一道路运行态势</div>
<div class="abs" style="left:6.00px;top:142.20px;width:123.00px;height:21.50px;background:#f2f2f2;"></div>
<div class="h" style="left:23.70px;top:149.76px;font-size:26.96px;color:#2e2e2e;">杭州市西湖区文一道路运行态势</div>
<div class="h" style="left:23.70px;top:171.36px;font-size:26.96px;color:#5e5e5e;">杭州市西湖区文一道路运行态势</div>
<div class="abs" style="left:135.50px;top:37.00px;width:82.00px;height:19.80px;background:#fff;border-radius:2.5px"></div>
<svg class="abs" style="left:142px;top:42px" width="11" height="11" viewBox="0 0 11 11">
<path d="M2 8.8 L9 1.8" stroke="#555" stroke-width="0.75" stroke-dasharray="1.6 0.6"/>
<path d="M0.9 7.4 L3.4 9.9 M7.6 0.7 L10.1 3.2" stroke="#555" stroke-width="0.8"/>
</svg>
<div class="h" style="left:156.00px;top:43.23px;font-size:31.40px;color:#333;">路段</div>
<div class="abs" style="left:178.00px;top:38.20px;width:37.80px;height:17.30px;background:#1677ff;border-radius:2.5px"></div>
<svg class="abs" style="left:183.3px;top:42.8px" width="9" height="9" viewBox="0 0 9 9">
<path d="M7.6 1.4 L2.6 1.4 C0.6 1.4 0.6 4.3 2.6 4.3 L6.2 4.3 C8.2 4.3 8.2 7.3 6.2 7.3 L1.2 7.3" stroke="#fff" stroke-width="0.8" fill="none"/>
<path d="M6.3 0.3 L7.6 1.4 L6.3 2.5 M2.5 6.2 L1.2 7.3 L2.5 8.4" stroke="#fff" stroke-width="0.7" fill="none"/>
</svg>
<div class="h" style="left:194.60px;top:43.23px;font-size:31.40px;color:#fff;">路径</div>
<div class="abs" style="left:228.00px;top:36.30px;width:55.00px;height:19.20px;background:#fff;border-radius:2.5px"></div>
<svg class="abs" style="left:232.7px;top:40.2px" width="10" height="10" viewBox="0 0 10 10">
<path d="M3.2 0.6 L1.6 0.6 Q0.6 0.6 0.6 1.6 L0.6 8.4 Q0.6 9.4 1.6 9.4 L3.2 9.4 M6.8 0.6 L8.4 0.6 Q9.4 0.6 9.4 1.6 L9.4 8.4 Q9.4 9.4 8.4 9.4 L6.8 9.4" stroke="#666" stroke-width="0.85" fill="none"/>
<path d="M2.8 7 L2.8 5.2 M4.6 7 L4.6 3.4 M6.6 7 L6.6 5.5" stroke="#666" stroke-width="0.85"/>
</svg>
<div class="h" style="left:246.50px;top:41.51px;font-size:31.60px;color:#333;">数据信息</div>
<div class="abs" style="left:637.20px;top:38.20px;width:54.60px;height:17.60px;background:#1677ff;border-radius:2.5px"></div>
<svg class="abs" style="left:643.5px;top:42.5px" width="9" height="9" viewBox="0 0 9 9">
<path d="M3.2 3.6 C0.5 3.6 0.2 5.6 2.2 5.8 L6.5 5.9 C8.4 6.1 8 8.2 5.8 8.2 L2.5 8.2" stroke="#fff" stroke-width="0.8" fill="none"/>
<path d="M4.2 4.6 L7.6 1.2 L8.4 2 L5 5.4 L4 5.6 Z" stroke="#fff" stroke-width="0.7" fill="none"/>
</svg>
<div class="h" style="left:654.60px;top:43.40px;font-size:30.80px;color:#fff;">新建路径</div>
<div class="abs" style="left:703.00px;top:38.20px;width:54.80px;height:17.60px;background:#1677ff;border-radius:2.5px"></div>
<svg class="abs" style="left:709px;top:42.5px" width="9" height="9" viewBox="0 0 9 9">
<path d="M3.2 3.6 C0.5 3.6 0.2 5.6 2.2 5.8 L6.5 5.9 C8.4 6.1 8 8.2 5.8 8.2 L2.5 8.2" stroke="#fff" stroke-width="0.8" fill="none"/>
<path d="M4.2 4.6 L7.6 1.2 L8.4 2 L5 5.4 L4 5.6 Z" stroke="#fff" stroke-width="0.7" fill="none"/>
</svg>
<div class="h" style="left:720.70px;top:43.40px;font-size:30.80px;color:#fff;">编辑路径</div>
<div class="abs" style="left:306.10px;top:346.90px;width:75.50px;height:31.40px;background:#fff;border-radius:4px;box-shadow:0 0 3px rgba(0,0,0,0.06)"></div>
<div class="h" style="left:317.70px;top:351.91px;font-size:27.40px;color:#4a4a4a;">按住Shift多选</div>
<div class="h" style="left:317.70px;top:366.71px;font-size:27.40px;color:#4a4a4a;">按住Alt取消选择</div>
<div class="panel" style="left:768px;top:36.7px;width:310.3px;height:559.8px;border-radius:4px;box-shadow:0 0 6px rgba(0,0,0,0.08)"></div>
<div class="abs" style="left:777.80px;top:44.00px;width:292.20px;height:23.00px;background:#deeefd;border-radius:4px 4px 0 0"></div>
<div class="h" style="left:787.40px;top:52.26px;font-size:31.20px;color:#222;font-weight:bold;">路径列表</div>
<div class="abs" style="left:824.70px;top:49.30px;width:67.20px;height:13.30px;background:#fff;border-radius:2px"></div>
<div class="h" style="left:829.80px;top:52.40px;font-size:30.00px;color:#333;">路径1</div>
<svg class="abs" style="left:879.5px;top:54px" width="7" height="5" viewBox="0 0 7 5"><path d="M0.8 1 L3.5 3.8 L6.2 1" stroke="#444" stroke-width="0.8" fill="none"/></svg>
<div class="h" style="left:899.80px;top:52.94px;font-size:22.20px;color:#777;">该路径共</div>
<div class="h" style="left:924.70px;top:52.94px;font-size:22.20px;color:#1677ff;">12个</div>
<div class="h" style="left:937.60px;top:52.94px;font-size:22.20px;color:#777;">路段</div>
<div class="abs" style="left:777.80px;top:67.00px;width:292.80px;height:23.40px;background:#f7f8fa;"></div>
<div class="abs" style="left:777.80px;top:90.40px;width:292.80px;height:23.80px;background:#f5f8fd;"></div>
<div class="abs" style="left:868.90px;top:67.00px;width:0.80px;height:187.13px;background:#ebeef2;"></div>
<div class="abs" style="left:897.60px;top:67.00px;width:0.80px;height:187.13px;background:#ebeef2;"></div>
<div class="abs" style="left:940.60px;top:67.00px;width:0.80px;height:187.13px;background:#ebeef2;"></div>
<div class="abs" style="left:984.00px;top:67.00px;width:0.80px;height:187.13px;background:#ebeef2;"></div>
<div class="abs" style="left:1027.40px;top:67.00px;width:0.80px;height:187.13px;background:#ebeef2;"></div>
<div class="abs" style="left:1070.20px;top:67.00px;width:0.80px;height:187.13px;background:#ebeef2;"></div>
<div class="abs" style="left:777.80px;top:67.00px;width:0.80px;height:189.00px;background:#ebeef2;"></div>
<div class="abs" style="left:777.80px;top:90.00px;width:292.80px;height:0.80px;background:#ebeef2;"></div>
<div class="abs" style="left:777.80px;top:113.80px;width:292.80px;height:0.80px;background:#ebeef2;"></div>
<div class="abs" style="left:777.80px;top:137.60px;width:292.80px;height:0.80px;background:#ebeef2;"></div>
<div class="abs" style="left:777.80px;top:161.30px;width:292.80px;height:0.80px;background:#ebeef2;"></div>
<div class="abs" style="left:777.80px;top:185.00px;width:292.80px;height:0.80px;background:#ebeef2;"></div>
<div class="abs" style="left:777.80px;top:208.70px;width:292.80px;height:0.80px;background:#ebeef2;"></div>
<div class="abs" style="left:777.80px;top:232.40px;width:292.80px;height:0.80px;background:#ebeef2;"></div>
<div class="h" style="left:798.55px;top:76.10px;width:200px;text-align:center;font-size:30.80px;color:#666;">名称</div>
<div class="h" style="left:858.65px;top:76.10px;width:200px;text-align:center;font-size:30.80px;color:#666;">长度</div>
<div class="h" style="left:894.50px;top:76.10px;width:200px;text-align:center;font-size:30.80px;color:#666;">延误指数</div>
<div class="h" style="left:937.70px;top:76.10px;width:200px;text-align:center;font-size:30.80px;color:#666;">拥堵指数</div>
<div class="h" style="left:981.10px;top:76.10px;width:200px;text-align:center;font-size:30.80px;color:#666;">行程时间</div>
<div class="h" style="left:1024.20px;top:76.10px;width:200px;text-align:center;font-size:30.80px;color:#666;">所属路径</div>
<div class="h" style="left:793.55px;top:98.33px;width:240px;text-align:center;font-size:31.40px;color:#2f7cf6;">天府大道路段2</div>
<div class="h" style="left:853.65px;top:98.57px;width:240px;text-align:center;font-size:34.40px;color:#2f7cf6;">23</div>
<div class="h" style="left:889.50px;top:98.57px;width:240px;text-align:center;font-size:34.40px;color:#2f7cf6;">83.2</div>
<div class="h" style="left:932.70px;top:98.57px;width:240px;text-align:center;font-size:34.40px;color:#2f7cf6;">82</div>
<div class="h" style="left:976.10px;top:98.57px;width:240px;text-align:center;font-size:34.40px;color:#2f7cf6;">82.3</div>
<div class="h" style="left:1019.20px;top:98.33px;width:240px;text-align:center;font-size:31.40px;color:#2f7cf6;">路径</div>
<div class="h" style="left:793.55px;top:122.13px;width:240px;text-align:center;font-size:31.40px;color:#555;">天府大道路段3</div>
<div class="h" style="left:853.65px;top:122.37px;width:240px;text-align:center;font-size:34.40px;color:#555;">23</div>
<div class="h" style="left:889.50px;top:122.37px;width:240px;text-align:center;font-size:34.40px;color:#555;">83.2</div>
<div class="h" style="left:932.70px;top:122.37px;width:240px;text-align:center;font-size:34.40px;color:#555;">82</div>
<div class="h" style="left:976.10px;top:122.37px;width:240px;text-align:center;font-size:34.40px;color:#555;">82.3</div>
<div class="h" style="left:1019.20px;top:122.13px;width:240px;text-align:center;font-size:31.40px;color:#555;">路径</div>
<div class="h" style="left:793.55px;top:145.88px;width:240px;text-align:center;font-size:31.40px;color:#555;">天府大道路段4</div>
<div class="h" style="left:853.65px;top:146.12px;width:240px;text-align:center;font-size:34.40px;color:#555;">23</div>
<div class="h" style="left:889.50px;top:146.12px;width:240px;text-align:center;font-size:34.40px;color:#555;">83.2</div>
<div class="h" style="left:932.70px;top:146.12px;width:240px;text-align:center;font-size:34.40px;color:#555;">82</div>
<div class="h" style="left:976.10px;top:146.12px;width:240px;text-align:center;font-size:34.40px;color:#555;">82.3</div>
<div class="h" style="left:1019.20px;top:145.88px;width:240px;text-align:center;font-size:31.40px;color:#555;">路径</div>
<div class="h" style="left:793.55px;top:169.58px;width:240px;text-align:center;font-size:31.40px;color:#555;">天府大道路段5</div>
<div class="h" style="left:853.65px;top:169.82px;width:240px;text-align:center;font-size:34.40px;color:#555;">23</div>
<div class="h" style="left:889.50px;top:169.82px;width:240px;text-align:center;font-size:34.40px;color:#555;">83.2</div>
<div class="h" style="left:932.70px;top:169.82px;width:240px;text-align:center;font-size:34.40px;color:#555;">82.3</div>
<div class="h" style="left:976.10px;top:169.82px;width:240px;text-align:center;font-size:34.40px;color:#555;">82.3</div>
<div class="h" style="left:1019.20px;top:169.58px;width:240px;text-align:center;font-size:31.40px;color:#555;">路径</div>
<div class="h" style="left:793.55px;top:193.28px;width:240px;text-align:center;font-size:31.40px;color:#555;">天府大道路段5</div>
<div class="h" style="left:853.65px;top:193.52px;width:240px;text-align:center;font-size:34.40px;color:#555;">23</div>
<div class="h" style="left:889.50px;top:193.52px;width:240px;text-align:center;font-size:34.40px;color:#555;">83.2</div>
<div class="h" style="left:932.70px;top:193.52px;width:240px;text-align:center;font-size:34.40px;color:#555;">82.3</div>
<div class="h" style="left:976.10px;top:193.52px;width:240px;text-align:center;font-size:34.40px;color:#555;">82.3</div>
<div class="h" style="left:1019.20px;top:193.28px;width:240px;text-align:center;font-size:31.40px;color:#555;">路径</div>
<div class="h" style="left:793.55px;top:216.98px;width:240px;text-align:center;font-size:31.40px;color:#555;">天府大道路段5</div>
<div class="h" style="left:853.65px;top:217.22px;width:240px;text-align:center;font-size:34.40px;color:#555;">23</div>
<div class="h" style="left:889.50px;top:217.22px;width:240px;text-align:center;font-size:34.40px;color:#555;">83.2</div>
<div class="h" style="left:932.70px;top:217.22px;width:240px;text-align:center;font-size:34.40px;color:#555;">82.3</div>
<div class="h" style="left:976.10px;top:217.22px;width:240px;text-align:center;font-size:34.40px;color:#555;">82.3</div>
<div class="h" style="left:1019.20px;top:216.98px;width:240px;text-align:center;font-size:31.40px;color:#555;">路径</div>
<div class="h" style="left:792.55px;top:240.68px;width:240px;text-align:center;font-size:31.40px;color:#555;">天府大道路段7</div>
<div class="h" style="left:852.15px;top:240.92px;width:240px;text-align:center;font-size:34.40px;color:#555;">23</div>
<div class="h" style="left:888.00px;top:240.92px;width:240px;text-align:center;font-size:34.40px;color:#555;">64</div>
<div class="h" style="left:931.20px;top:240.92px;width:240px;text-align:center;font-size:34.40px;color:#555;">4</div>
<div class="h" style="left:974.60px;top:240.92px;width:240px;text-align:center;font-size:34.40px;color:#555;">82.3</div>
<div class="h" style="left:1018.20px;top:240.68px;width:240px;text-align:center;font-size:31.40px;color:#555;">路径</div>
<div class="abs" style="left:896.20px;top:261.80px;width:17.80px;height:18.30px;background:#f5f5f5;border:0.8px solid #eeeeee;border-radius:2px"></div>
<svg class="abs" style="left:902.5px;top:267.95px" width="5" height="6" viewBox="0 0 5 6"><path d="M3.4 0.8 L1.4 3 L3.4 5.2" stroke="#c8c8c8" stroke-width="0.7" fill="none"/></svg>
<div class="abs" style="left:916.30px;top:261.80px;width:17.70px;height:18.30px;background:#fff;border:0.9px solid #7fb0f7;border-radius:2.5px"></div>
<div class="h" style="left:915.20px;top:267.03px;width:80px;text-align:center;font-size:35.20px;color:#1677ff;">1</div>
<div class="abs" style="left:936.50px;top:261.80px;width:18.30px;height:18.30px;background:#fff;border:0.9px solid #c4c9d1;border-radius:2.5px"></div>
<div class="h" style="left:935.60px;top:267.03px;width:80px;text-align:center;font-size:35.20px;color:#555;">2</div>
<div class="h" style="left:955.80px;top:267.23px;width:80px;text-align:center;font-size:26.00px;color:#666;letter-spacing:2px;font-weight:bold">···</div>
<div class="abs" style="left:977.20px;top:261.80px;width:17.70px;height:18.30px;background:#fff;border:0.8px solid #eceef1;border-radius:2px"></div>
<svg class="abs" style="left:983.5px;top:267.95px" width="5" height="6" viewBox="0 0 5 6"><path d="M1.6 0.8 L3.6 3 L1.6 5.2" stroke="#777" stroke-width="0.7" fill="none"/></svg>
<div class="abs" style="left:1009.10px;top:261.80px;width:49.50px;height:18.30px;background:#fff;border:0.8px solid #e6ecf3;border-radius:2.5px"></div>
<div class="h" style="left:1015.60px;top:267.45px;font-size:29.20px;color:#555;">10条/页</div>
<svg class="abs" style="left:1047.8px;top:268.95px" width="5" height="4" viewBox="0 0 5 4"><path d="M0.8 1 L2.5 2.8 L4.2 1" stroke="#888" stroke-width="0.7" fill="none"/></svg>
<div class="abs" style="left:782.00px;top:293.20px;width:276.00px;height:0.80px;background:#f0f0f0;"></div>
<div class="abs" style="left:777.80px;top:307.50px;width:291.50px;height:24.00px;background:#dff0fd;border-radius:4px 4px 0 0"></div>
<div class="h" style="left:787.80px;top:316.17px;font-size:31.08px;color:#222;font-weight:bold;">全部路段列表</div>
<div class="h" style="left:843.60px;top:317.22px;font-size:23.20px;color:#888;">共 36个 路段</div>
<div class="abs" style="left:777.80px;top:331.50px;width:291.50px;height:23.30px;background:#f7f8fa;"></div>
<div class="abs" style="left:777.80px;top:354.40px;width:291.50px;height:0.80px;background:#ebeef2;"></div>
<div class="abs" style="left:777.80px;top:378.10px;width:291.50px;height:0.80px;background:#ebeef2;"></div>
<div class="abs" style="left:777.80px;top:401.80px;width:291.50px;height:0.80px;background:#ebeef2;"></div>
<div class="abs" style="left:777.80px;top:425.50px;width:291.50px;height:0.80px;background:#ebeef2;"></div>
<div class="abs" style="left:777.80px;top:449.20px;width:291.50px;height:0.80px;background:#ebeef2;"></div>
<div class="abs" style="left:777.80px;top:472.90px;width:291.50px;height:0.80px;background:#ebeef2;"></div>
<div class="abs" style="left:777.80px;top:496.60px;width:291.50px;height:0.80px;background:#ebeef2;"></div>
<div class="abs" style="left:777.80px;top:520.30px;width:291.50px;height:0.80px;background:#ebeef2;"></div>
<div class="abs" style="left:1068.50px;top:331.50px;width:0.80px;height:213.00px;background:#ebeef2;"></div>
<div class="abs" style="left:785.40px;top:339.05px;width:8.30px;height:8.20px;background:#fff;border:0.8px solid #d6d9de;border-radius:1px"></div>
<div class="h" style="left:915.30px;top:339.45px;width:160px;text-align:center;font-size:30.80px;color:#666;">名称</div>
<div class="abs" style="left:785.40px;top:362.55px;width:8.30px;height:8.20px;background:#fff;border:0.8px solid #d6d9de;border-radius:1px"></div>
<div class="h" style="left:895.30px;top:363.00px;width:320px;text-align:center;font-size:30.40px;color:#555;">天府大道路段1</div>
<div class="abs" style="left:785.40px;top:386.25px;width:8.30px;height:8.20px;background:#fff;border:0.8px solid #d6d9de;border-radius:1px"></div>
<div class="h" style="left:895.30px;top:386.70px;width:320px;text-align:center;font-size:30.40px;color:#555;">天府大道路段2</div>
<div class="abs" style="left:785.40px;top:409.95px;width:8.30px;height:8.20px;background:#fff;border:0.8px solid #d6d9de;border-radius:1px"></div>
<div class="h" style="left:895.30px;top:410.40px;width:320px;text-align:center;font-size:30.40px;color:#555;">天府大道路段3</div>
<div class="abs" style="left:785.40px;top:433.65px;width:8.30px;height:8.20px;background:#fff;border:0.8px solid #d6d9de;border-radius:1px"></div>
<div class="h" style="left:895.30px;top:434.10px;width:320px;text-align:center;font-size:30.40px;color:#555;">天府大道路段4</div>
<div class="abs" style="left:785.40px;top:457.35px;width:8.30px;height:8.20px;background:#fff;border:0.8px solid #d6d9de;border-radius:1px"></div>
<div class="h" style="left:895.30px;top:457.80px;width:320px;text-align:center;font-size:30.40px;color:#555;">天府大道路段5</div>
<div class="abs" style="left:785.40px;top:481.05px;width:8.30px;height:8.20px;background:#fff;border:0.8px solid #d6d9de;border-radius:1px"></div>
<div class="h" style="left:895.30px;top:481.50px;width:320px;text-align:center;font-size:30.40px;color:#555;">天府大道路段6</div>
<div class="abs" style="left:785.40px;top:504.75px;width:8.30px;height:8.20px;background:#fff;border:0.8px solid #d6d9de;border-radius:1px"></div>
<div class="h" style="left:895.30px;top:505.20px;width:320px;text-align:center;font-size:30.40px;color:#555;">天府大道路段6</div>
<div class="abs" style="left:785.40px;top:528.45px;width:8.30px;height:8.20px;background:#fff;border:0.8px solid #d6d9de;border-radius:1px"></div>
<div class="h" style="left:895.30px;top:528.90px;width:320px;text-align:center;font-size:30.40px;color:#555;">天府大道路段6</div>
<div class="abs" style="left:896.20px;top:560.20px;width:17.80px;height:18.30px;background:#f5f5f5;border:0.8px solid #eeeeee;border-radius:2px"></div>
<svg class="abs" style="left:902.5px;top:566.35px" width="5" height="6" viewBox="0 0 5 6"><path d="M3.4 0.8 L1.4 3 L3.4 5.2" stroke="#c8c8c8" stroke-width="0.7" fill="none"/></svg>
<div class="abs" style="left:916.30px;top:560.20px;width:17.70px;height:18.30px;background:#fff;border:0.9px solid #7fb0f7;border-radius:2.5px"></div>
<div class="h" style="left:915.20px;top:565.43px;width:80px;text-align:center;font-size:35.20px;color:#1677ff;">1</div>
<div class="abs" style="left:936.50px;top:560.20px;width:18.30px;height:18.30px;background:#fff;border:0.9px solid #c4c9d1;border-radius:2.5px"></div>
<div class="h" style="left:935.60px;top:565.43px;width:80px;text-align:center;font-size:35.20px;color:#555;">2</div>
<div class="h" style="left:955.80px;top:565.63px;width:80px;text-align:center;font-size:26.00px;color:#666;letter-spacing:2px;font-weight:bold">···</div>
<div class="abs" style="left:977.20px;top:560.20px;width:17.70px;height:18.30px;background:#fff;border:0.8px solid #eceef1;border-radius:2px"></div>
<svg class="abs" style="left:983.5px;top:566.35px" width="5" height="6" viewBox="0 0 5 6"><path d="M1.6 0.8 L3.6 3 L1.6 5.2" stroke="#777" stroke-width="0.7" fill="none"/></svg>
<div class="abs" style="left:1009.10px;top:560.20px;width:49.50px;height:18.30px;background:#fff;border:0.8px solid #e6ecf3;border-radius:2.5px"></div>
<div class="h" style="left:1015.60px;top:565.85px;font-size:29.20px;color:#555;">10条/页</div>
<svg class="abs" style="left:1047.8px;top:567.35px" width="5" height="4" viewBox="0 0 5 4"><path d="M0.8 1 L2.5 2.8 L4.2 1" stroke="#888" stroke-width="0.7" fill="none"/></svg>
<div class="panel" style="left:146.5px;top:421.8px;width:607.9px;height:178.2px;border-radius:3px;box-shadow:0 0 5px rgba(0,0,0,0.07)"></div>
<div class="abs" style="left:146.50px;top:441.00px;width:607.90px;height:0.80px;background:#f2f3f5;"></div>
<div class="abs" style="left:529.30px;top:424.20px;width:57.40px;height:16.50px;background:#fff;border:0.8px solid #e6e8eb;border-radius:2px"></div>
<div class="h" style="left:538.20px;top:428.78px;font-size:30.20px;color:#333;">平均速度</div>
<svg class="abs" style="left:572.5px;top:431px" width="5" height="4" viewBox="0 0 5 4"><path d="M0.8 1 L2.5 2.8 L4.2 1" stroke="#555" stroke-width="0.8" fill="none"/></svg>
<div class="h" style="left:597.80px;top:429.20px;font-size:26.68px;color:#555;">当前切片时间</div>
<div class="abs" style="left:644.90px;top:425.40px;width:102.20px;height:12.00px;background:#fff;border:0.8px solid #eceef1;border-radius:2px"></div>
<div class="h" style="left:649.30px;top:428.81px;font-size:21.60px;color:#888;">2023-3-10&nbsp;&nbsp;9:00:00</div>
<div class="h" style="left:155.40px;top:451.98px;font-size:26.80px;color:#333;">起止日期</div>
<div class="abs" style="left:190.80px;top:449.40px;width:103.20px;height:10.30px;background:#fff;border:0.8px solid #e8e8e8;border-radius:2px"></div>
<div class="h" style="left:195.80px;top:451.91px;font-size:22.40px;color:#666;letter-spacing:-0.24px">2023年3月10日 - 2023年3月11日</div>
<svg class="abs" style="left:284px;top:451px" width="7" height="7" viewBox="0 0 7 7"><rect x="0.8" y="1.2" width="5.4" height="5" stroke="#d0d0d0" stroke-width="0.6" fill="none"/><path d="M0.8 2.6 L6.2 2.6 M2 0.5 L2 1.8 M5 0.5 L5 1.8" stroke="#d0d0d0" stroke-width="0.6"/></svg>
<div class="h" style="left:314.10px;top:451.90px;font-size:26.68px;color:#333;">每日起止时间</div>
<div class="abs" style="left:358.50px;top:449.60px;width:94.80px;height:10.00px;background:#fff;border:0.8px solid #e8e8e8;border-radius:2px"></div>
<div class="h" style="left:365.20px;top:451.78px;font-size:26.80px;color:#999;">00</div>
<div class="h" style="left:377.80px;top:451.78px;font-size:26.80px;color:#999;">00</div>
<div class="h" style="left:390.40px;top:451.78px;font-size:26.80px;color:#999;">00</div>
<div class="h" style="left:403.70px;top:451.78px;font-size:26.80px;color:#999;">23</div>
<div class="h" style="left:415.60px;top:451.78px;font-size:26.80px;color:#999;">59</div>
<div class="h" style="left:426.70px;top:451.78px;font-size:26.80px;color:#999;">59</div>
<div class="h" style="left:373.30px;top:451.78px;font-size:26.80px;color:#aaa;">:</div>
<div class="h" style="left:385.90px;top:451.78px;font-size:26.80px;color:#aaa;">:</div>
<div class="h" style="left:411.40px;top:451.78px;font-size:26.80px;color:#aaa;">:</div>
<div class="h" style="left:423.70px;top:451.78px;font-size:26.80px;color:#aaa;">:</div>
<div class="h" style="left:398.60px;top:451.78px;font-size:26.80px;color:#999;">-</div>
<svg class="abs" style="left:445px;top:451.5px" width="6.5" height="6.5" viewBox="0 0 7 7"><circle cx="3.5" cy="3.5" r="2.8" stroke="#d0d0d0" stroke-width="0.6" fill="none"/><path d="M3.5 1.8 L3.5 3.6 L4.8 4.4" stroke="#d0d0d0" stroke-width="0.6" fill="none"/></svg>
<svg class="abs" style="left:606.8px;top:450.5px" width="9" height="9" viewBox="0 0 9 9"><rect x="0.6" y="1" width="7.8" height="7.2" rx="0.8" stroke="#1677ff" stroke-width="0.8" fill="#dce9fd"/><rect x="0.6" y="1" width="7.8" height="2.2" fill="#1677ff"/><path d="M2 5.5 C3 4.5 4 6.5 5 5.5 S6.5 5 7 5.8" stroke="#1677ff" stroke-width="0.6" fill="none"/></svg>
<div class="h" style="left:622.20px;top:452.00px;font-size:26.68px;color:#1677ff;">时空图</div>
<svg class="abs" style="left:648.8px;top:450.5px" width="9" height="9" viewBox="0 0 9 9"><path d="M0.8 0.5 L0.8 8.2 L8.6 8.2" stroke="#555" stroke-width="0.7" fill="none"/><path d="M1.8 6.5 L3.8 4 L5.3 5.3 L8.2 2" stroke="#555" stroke-width="0.7" fill="none"/></svg>
<div class="h" style="left:664.40px;top:451.99px;font-size:26.72px;color:#444;">时空切片图</div>
<svg class="abs" style="left:703.2px;top:450.3px" width="9" height="9" viewBox="0 0 9 9"><path d="M0.8 0.5 L0.8 8.2 L8.6 8.2" stroke="#555" stroke-width="0.7" fill="none"/><path d="M3 7.8 L3 4 M5 7.8 L5 2 M7 7.8 L7 5" stroke="#555" stroke-width="0.8" fill="none"/></svg>
<div class="h" style="left:718.20px;top:452.00px;font-size:26.68px;color:#444;">条形图</div>
<svg class="abs" style="left:0;top:0" width="1080" height="612" viewBox="0 0 1080 612"><rect x="173.20" y="467.00" width="552.30" height="100.00" fill="#5b87c0"/><rect x="208.10" y="473.10" width="23.90" height="51.80" fill="#5f9ca8"/><rect x="232.00" y="473.10" width="38.20" height="56.30" fill="#63a99a"/><rect x="232.00" y="529.40" width="38.20" height="4.50" fill="#5dd96e"/><rect x="232.00" y="512.30" width="38.20" height="3.90" fill="#b8e654"/><rect x="270.20" y="467.00" width="10.60" height="66.90" fill="#7ad35a"/><rect x="270.20" y="533.90" width="10.60" height="33.10" fill="#5ab395"/><rect x="173.20" y="479.60" width="97.00" height="4.90" fill="#5dd96e"/><rect x="173.20" y="484.50" width="97.00" height="4.80" fill="#e2ee45"/><rect x="196.60" y="483.60" width="35.40" height="3.20" fill="#f3a20d"/><rect x="242.70" y="479.60" width="38.10" height="2.50" fill="#f3a20d"/><rect x="233.80" y="482.10" width="47.00" height="5.00" fill="#ff0000"/><rect x="173.20" y="489.30" width="97.00" height="4.70" fill="#5dd96e"/><rect x="280.80" y="467.00" width="15.20" height="6.10" fill="#5dd96e"/><rect x="280.80" y="473.10" width="15.20" height="5.10" fill="#b8e654"/><rect x="280.80" y="478.20" width="15.20" height="17.60" fill="#ff0000"/><rect x="280.80" y="495.80" width="15.20" height="9.20" fill="#a8e84a"/><rect x="280.80" y="505.00" width="15.20" height="9.00" fill="#e2ee45"/><rect x="280.80" y="514.00" width="15.20" height="9.00" fill="#ecdf0f"/><rect x="280.80" y="523.00" width="15.20" height="9.00" fill="#b8e060"/><rect x="280.80" y="532.00" width="15.20" height="8.00" fill="#a5e050"/><rect x="280.80" y="540.00" width="15.20" height="10.00" fill="#b8e660"/><rect x="280.80" y="550.00" width="15.20" height="9.00" fill="#e8f040"/><rect x="280.80" y="559.00" width="15.20" height="8.00" fill="#f3a20d"/><rect x="296.00" y="467.00" width="29.70" height="62.40" fill="#7ad35a"/><rect x="296.00" y="529.40" width="21.00" height="4.60" fill="#5dd96e"/><rect x="296.00" y="534.00" width="29.70" height="33.00" fill="#5ab395"/><rect x="317.00" y="529.40" width="8.70" height="4.60" fill="#5ab395"/><rect x="272.00" y="538.30" width="8.80" height="4.70" fill="#9fdc9e"/><rect x="296.00" y="538.30" width="29.70" height="4.70" fill="#9fdc9e"/><rect x="352.00" y="467.00" width="25.50" height="60.60" fill="#5f9ca8"/><rect x="325.70" y="479.60" width="51.80" height="4.40" fill="#5dd96e"/><rect x="325.70" y="484.00" width="9.00" height="5.00" fill="#e2ee45"/><rect x="334.70" y="484.00" width="42.80" height="2.00" fill="#d8e24a"/><rect x="340.00" y="483.00" width="37.50" height="3.00" fill="#f3a20d"/><rect x="334.70" y="486.00" width="42.80" height="3.00" fill="#ff0000"/><rect x="325.70" y="489.00" width="51.80" height="5.00" fill="#5dd96e"/><rect x="325.70" y="512.30" width="26.30" height="3.90" fill="#eeea1a"/><rect x="352.00" y="512.30" width="25.50" height="3.90" fill="#c8e84a"/><rect x="377.50" y="467.00" width="28.10" height="4.00" fill="#f3a20d"/><rect x="377.50" y="471.00" width="28.10" height="34.80" fill="#ff0000"/><rect x="377.50" y="505.80" width="28.10" height="4.20" fill="#eeea1a"/><rect x="377.50" y="510.00" width="28.10" height="11.60" fill="#ff0000"/><rect x="377.50" y="521.60" width="28.10" height="5.90" fill="#f3a20d"/><rect x="377.50" y="527.50" width="25.50" height="39.50" fill="#7ee060"/><rect x="403.00" y="527.50" width="3.80" height="39.50" fill="#a87b3b"/><rect x="405.60" y="467.00" width="5.40" height="60.00" fill="#5ec98a"/><rect x="406.80" y="527.00" width="4.20" height="40.00" fill="#5ab395"/><rect x="411.00" y="467.00" width="6.60" height="60.00" fill="#5f9ca8"/><rect x="405.60" y="513.00" width="6.40" height="3.00" fill="#b8e654"/><rect x="417.60" y="467.00" width="21.20" height="100.00" fill="#b3e451"/><rect x="417.60" y="477.30" width="21.20" height="13.10" fill="#ff0000"/><rect x="435.20" y="490.40" width="3.60" height="76.60" fill="#f3a20d"/><rect x="435.20" y="505.00" width="3.60" height="15.00" fill="#ff0000"/><rect x="435.20" y="520.00" width="3.60" height="14.00" fill="#c8e84a"/><rect x="438.80" y="467.00" width="4.20" height="60.00" fill="#62b89a"/><rect x="443.00" y="473.50" width="33.00" height="46.50" fill="#52c1b0"/><rect x="443.00" y="479.60" width="33.00" height="14.40" fill="#5ccaa0"/><rect x="443.00" y="484.50" width="33.00" height="4.80" fill="#6ad0a4"/><rect x="443.00" y="520.00" width="33.00" height="7.40" fill="#5aa8a0"/><rect x="476.00" y="473.70" width="127.50" height="5.90" fill="#5f9ca8"/><rect x="476.00" y="479.60" width="127.50" height="4.40" fill="#5dd96e"/><rect x="476.00" y="484.00" width="32.70" height="5.00" fill="#c8e850"/><rect x="508.70" y="484.00" width="94.80" height="5.00" fill="#d8e030"/><rect x="476.00" y="489.00" width="127.50" height="5.00" fill="#5dd96e"/><rect x="476.00" y="494.00" width="53.00" height="6.00" fill="#5f9ca8"/><rect x="476.00" y="500.00" width="53.00" height="5.00" fill="#62a2a8"/><rect x="476.00" y="512.30" width="100.00" height="4.50" fill="#5f9ca8"/><rect x="532.50" y="505.00" width="21.10" height="31.50" fill="#62a890"/><rect x="493.00" y="524.00" width="135.60" height="6.00" fill="#5f9ca8"/><rect x="508.70" y="536.50" width="119.90" height="4.20" fill="#eee000"/><rect x="603.50" y="474.20" width="122.00" height="16.50" fill="#b3e451"/><rect x="608.00" y="480.00" width="60.00" height="10.40" fill="#ff0000"/><rect x="603.50" y="484.00" width="4.50" height="6.40" fill="#f3a20d"/><rect x="668.00" y="480.00" width="37.00" height="7.60" fill="#f3a20d"/><rect x="705.00" y="480.00" width="20.50" height="10.20" fill="#ff0000"/><rect x="590.00" y="489.80" width="135.50" height="4.20" fill="#5dd96e"/><rect x="628.60" y="494.00" width="84.40" height="37.00" fill="#5f9ca8"/><rect x="628.60" y="494.00" width="84.40" height="5.00" fill="#63a99a"/><rect x="628.60" y="519.50" width="84.40" height="11.50" fill="#63a99a"/><rect x="713.00" y="467.00" width="12.50" height="100.00" fill="#5f9ca8"/><rect x="713.00" y="474.20" width="12.50" height="5.40" fill="#b3e451"/><rect x="713.00" y="480.00" width="12.50" height="10.20" fill="#ff0000"/><rect x="713.00" y="489.80" width="12.50" height="4.20" fill="#5dd96e"/><rect x="713.00" y="519.50" width="12.50" height="11.50" fill="#63a99a"/><rect x="603.50" y="533.00" width="122.00" height="10.70" fill="#b3e451"/><rect x="590.00" y="536.50" width="38.60" height="4.20" fill="#eee000"/><rect x="628.60" y="536.50" width="44.40" height="4.20" fill="#f3a20d"/><rect x="673.00" y="536.50" width="17.00" height="4.20" fill="#cfe850"/><rect x="690.00" y="536.50" width="19.00" height="4.20" fill="#eee000"/><rect x="709.00" y="536.50" width="16.50" height="4.20" fill="#f3a20d"/><path d="M172.5 499.3 L727 499.3" stroke="#3a3a3a" stroke-width="0.7"/><path d="M170 497.6 L173 499.3 L170 501 Z" fill="#333"/><circle cx="727.3" cy="499.3" r="1" fill="#333"/><path d="M173.5 576.1 L725.6 576.1" stroke="#c9ccd2" stroke-width="0.8"/><path d="M173.9 574.2 L173.9 576.1" stroke="#b8bcc4" stroke-width="0.6"/><path d="M230.8 574.2 L230.8 576.1" stroke="#b8bcc4" stroke-width="0.6"/><path d="M270.3 574.2 L270.3 576.1" stroke="#b8bcc4" stroke-width="0.6"/><path d="M325.8 574.2 L325.8 576.1" stroke="#b8bcc4" stroke-width="0.6"/><path d="M378.6 574.2 L378.6 576.1" stroke="#b8bcc4" stroke-width="0.6"/><path d="M410 574.2 L410 576.1" stroke="#b8bcc4" stroke-width="0.6"/><path d="M439 574.2 L439 576.1" stroke="#b8bcc4" stroke-width="0.6"/><path d="M474.2 574.2 L474.2 576.1" stroke="#b8bcc4" stroke-width="0.6"/><path d="M509.4 574.2 L509.4 576.1" stroke="#b8bcc4" stroke-width="0.6"/><path d="M531.7 574.2 L531.7 576.1" stroke="#b8bcc4" stroke-width="0.6"/><path d="M553.9 574.2 L553.9 576.1" stroke="#b8bcc4" stroke-width="0.6"/><path d="M603.9 574.2 L603.9 576.1" stroke="#b8bcc4" stroke-width="0.6"/><path d="M630.3 574.2 L630.3 576.1" stroke="#b8bcc4" stroke-width="0.6"/><path d="M673.3 574.2 L673.3 576.1" stroke="#b8bcc4" stroke-width="0.6"/><path d="M705.3 574.2 L705.3 576.1" stroke="#b8bcc4" stroke-width="0.6"/><path d="M725.6 574.2 L725.6 576.1" stroke="#b8bcc4" stroke-width="0.6"/><defs><linearGradient id="lg" x1="0" y1="0" x2="0" y2="1">
<stop offset="0" stop-color="#4f7fc2"/><stop offset="0.25" stop-color="#4fb8a0"/><stop offset="0.45" stop-color="#90dc40"/>
<stop offset="0.62" stop-color="#e6e01c"/><stop offset="0.8" stop-color="#f39a0c"/><stop offset="1" stop-color="#ff0000"/></linearGradient></defs><rect x="730.5" y="479.6" width="5.8" height="74.8" fill="url(#lg)"/><path d="M733.5 479.6 L739 474.8 L739 479.6 Z" fill="#4f7fc2"/><path d="M733.5 554.4 L739 559.2 L739 554.4 Z" fill="#ff0000"/></svg>
<div class="h" style="left:743.30px;top:474.31px;font-size:22.40px;color:#bbb;">80</div>
<div class="h" style="left:745.00px;top:555.11px;font-size:22.40px;color:#bbb;">0</div>
<div class="h" style="left:148.90px;top:473.12px;width:80px;text-align:center;font-size:24.00px;color:#999;">23</div>
<div class="h" style="left:148.90px;top:488.52px;width:80px;text-align:center;font-size:24.00px;color:#999;">20</div>
<div class="h" style="left:148.90px;top:503.62px;width:80px;text-align:center;font-size:24.00px;color:#999;">16</div>
<div class="h" style="left:148.90px;top:517.92px;width:80px;text-align:center;font-size:24.00px;color:#999;">12</div>
<div class="h" style="left:148.90px;top:533.72px;width:80px;text-align:center;font-size:24.00px;color:#999;">8</div>
<div class="h" style="left:148.90px;top:548.82px;width:80px;text-align:center;font-size:24.00px;color:#999;">4</div>
<div class="h" style="left:148.90px;top:564.12px;width:80px;text-align:center;font-size:24.00px;color:#999;">0</div>
<div class="h" style="left:187.00px;top:580.17px;width:160px;text-align:center;font-size:23.60px;color:#666;">路段1</div>
<div class="h" style="left:224.70px;top:580.17px;width:160px;text-align:center;font-size:23.60px;color:#666;">路段2</div>
<div class="h" style="left:278.90px;top:580.17px;width:160px;text-align:center;font-size:23.60px;color:#666;">路段3</div>
<div class="h" style="left:324.70px;top:580.17px;width:160px;text-align:center;font-size:23.60px;color:#666;">路段4</div>
<div class="h" style="left:372.80px;top:580.17px;width:160px;text-align:center;font-size:23.60px;color:#666;">路段5</div>
<div class="h" style="left:402.50px;top:580.17px;width:160px;text-align:center;font-size:23.60px;color:#666;">路段6</div>
<div class="h" style="left:432.50px;top:580.17px;width:160px;text-align:center;font-size:23.60px;color:#666;">路段7</div>
<div class="h" style="left:473.60px;top:580.17px;width:160px;text-align:center;font-size:23.60px;color:#666;">路段8</div>
<div class="h" style="left:501.00px;top:580.17px;width:160px;text-align:center;font-size:23.60px;color:#666;">路段9</div>
<div class="h" style="left:523.30px;top:580.17px;width:160px;text-align:center;font-size:23.60px;color:#666;">路段10</div>
<div class="h" style="left:560.80px;top:580.17px;width:160px;text-align:center;font-size:23.60px;color:#666;">路段11</div>
<div class="h" style="left:595.60px;top:580.17px;width:160px;text-align:center;font-size:23.60px;color:#666;">路段12</div>
<div class="h" style="left:633.90px;top:580.17px;width:160px;text-align:center;font-size:23.60px;color:#666;">路段13</div>
<div class="h" style="left:669.20px;top:580.17px;width:160px;text-align:center;font-size:23.60px;color:#666;">路段14</div>
<div class="h" style="left:695.00px;top:580.17px;width:160px;text-align:center;font-size:23.60px;color:#666;">路段15</div>
<div class="abs" style="left:529.30px;top:445.10px;width:57.40px;height:63.60px;background:#fff;border-radius:2.5px;box-shadow:0 1px 4px rgba(0,0,0,0.12)"></div>
<div class="h" style="left:541.10px;top:453.92px;font-size:30.68px;color:#1677ff;">平均速度</div>
<div class="h" style="left:541.10px;top:472.52px;font-size:30.68px;color:#555;">行程时间</div>
<div class="h" style="left:541.10px;top:491.02px;font-size:30.68px;color:#555;">拥堵指数</div>
</body></html>
